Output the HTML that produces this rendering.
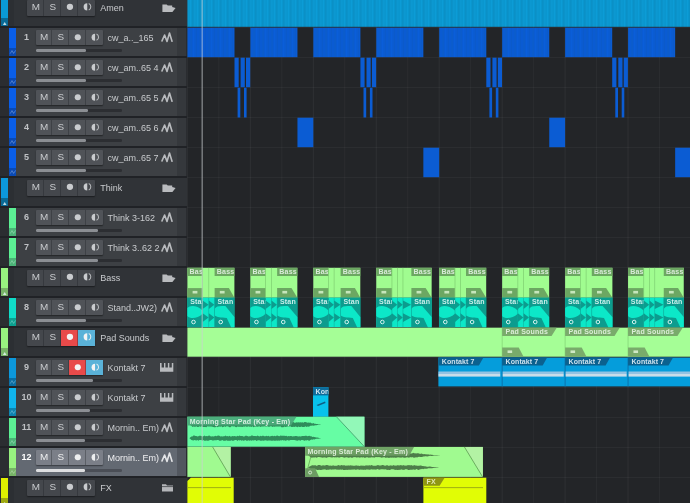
<!DOCTYPE html>
<html lang="en"><head><meta charset="utf-8"><title>Arrangement</title>
<style>
html,body{margin:0;padding:0;background:#232528;}
body{width:690px;height:503px;overflow:hidden;position:relative;font-family:"Liberation Sans",sans-serif;}
#root{position:absolute;left:0;top:0;width:690px;height:503px;overflow:hidden;background:#232528;filter:blur(0.42px);}
#tl{position:absolute;left:0;top:0;}
#panel{position:absolute;left:0;top:0;width:187.4px;height:503px;background:#2b2d31;overflow:hidden;}
.row{position:absolute;left:0;width:187.4px;height:30px;}
.sep{position:absolute;left:0;width:187.4px;height:1.4px;background:#202226;}
.fbg{position:absolute;left:8.3px;top:0;width:179.1px;height:30px;background:#303337;}
.fbg2{position:absolute;left:8.3px;top:0;width:5.7px;height:30px;background:#2c2f33;}
.tbg{position:absolute;left:16.4px;top:0;width:160.9px;height:30px;background:#3d4044;}
.tbg2{position:absolute;left:177.4px;top:0;width:8.6px;height:30px;background:#35383c;}
.tbg3{position:absolute;left:186px;top:0;width:1.4px;height:30px;background:#2a2c30;}
.sel .tbg{background:#636972;}
.sel .tbg2{background:#52575f;}
.strip{position:absolute;}
.btns{position:absolute;height:14.6px;width:68.2px;background:#505358;box-shadow:0 1px 1.5px rgba(0,0,0,.45);border-radius:1px;}
.row.f .btns{left:27.3px;top:2.3px;height:15.8px;background:#44474c;}
.row.f .b{line-height:13.6px;}
.row.f .b svg{top:-0.7px;}
.row.t .btns{left:35.6px;top:2.7px;width:67.2px;}
.sel .btns{background:#7b7f88;}
.b{position:absolute;top:0;height:100%;width:17.05px;text-align:center;color:#c9cbce;font-size:9.9px;line-height:15px;}
.row.t .b{width:16.8px;line-height:14.6px;}
.b+.b{box-shadow:-0.6px 0 0 rgba(30,32,35,.55);}
.b svg{position:absolute;left:0;top:0;width:100%;height:100%;}
.rec{background:#e84a4a;}
.mon{background:#5ab2d8;}
.num{position:absolute;left:16.9px;width:19px;text-align:center;top:4.5px;font-size:9px;line-height:11px;color:#bfc1c4;font-weight:bold;}
.sel .num{color:#fff;}
.name{position:absolute;font-size:9px;line-height:11px;color:#c9cbce;white-space:nowrap;}
.row.f .name{left:100.3px;top:5.5px;}
.row.t .name{left:107.6px;top:5.4px;}
.sel .name{color:#f0f0f2;}
.sl{position:absolute;left:35.6px;top:21.8px;height:2.6px;width:86px;background:#2c2e32;border-radius:1.3px;}
.sl i{position:absolute;left:0;top:0;height:100%;background:#8b8e93;border-radius:1.3px;display:block;}
.sel .sl{background:#4a4e56;}
.sel .sl i{background:#dedfe1;}
.ico{position:absolute;}
</style></head>
<body><div id="root">
<svg id="tl" width="690" height="503" viewBox="0 0 690 503" font-family="Liberation Sans, sans-serif">
<defs>
<pattern id="pa" width="7" height="8" patternUnits="userSpaceOnUse"><rect width="7" height="8" fill="#0a96ce"/><rect x="1" width="1" height="8" fill="#0c9cd6"/><rect x="3.2" width="1.2" height="8" fill="#0b8ec4"/><rect x="5.4" width="0.8" height="8" fill="#0c9ad4"/></pattern>
<pattern id="pb" width="9" height="8" patternUnits="userSpaceOnUse"><rect width="9" height="8" fill="#0a5bd2"/><rect x="1.5" width="1.2" height="8" fill="#0c5cc8"/><rect x="4.2" width="1" height="8" fill="#0a5edb"/><rect x="6.8" width="1" height="8" fill="#0b59c9"/></pattern>
</defs>
<rect x="187.4" y="0" width="502.6" height="503" fill="#232528"/>
<rect x="186.9" y="0" width="1" height="503" fill="#fff" opacity="0.055"/>
<rect x="218.38" y="0" width="1" height="503" fill="#fff" opacity="0.04"/>
<rect x="249.85" y="0" width="1" height="503" fill="#fff" opacity="0.055"/>
<rect x="281.33" y="0" width="1" height="503" fill="#fff" opacity="0.04"/>
<rect x="312.8" y="0" width="1" height="503" fill="#fff" opacity="0.055"/>
<rect x="344.27" y="0" width="1" height="503" fill="#fff" opacity="0.04"/>
<rect x="375.75" y="0" width="1" height="503" fill="#fff" opacity="0.055"/>
<rect x="407.23" y="0" width="1" height="503" fill="#fff" opacity="0.04"/>
<rect x="438.7" y="0" width="1" height="503" fill="#fff" opacity="0.055"/>
<rect x="470.18" y="0" width="1" height="503" fill="#fff" opacity="0.04"/>
<rect x="501.65" y="0" width="1" height="503" fill="#fff" opacity="0.055"/>
<rect x="533.12" y="0" width="1" height="503" fill="#fff" opacity="0.04"/>
<rect x="564.6" y="0" width="1" height="503" fill="#fff" opacity="0.055"/>
<rect x="596.08" y="0" width="1" height="503" fill="#fff" opacity="0.04"/>
<rect x="627.55" y="0" width="1" height="503" fill="#fff" opacity="0.055"/>
<rect x="659.02" y="0" width="1" height="503" fill="#fff" opacity="0.04"/>
<rect x="690.5" y="0" width="1" height="503" fill="#fff" opacity="0.055"/>
<rect x="187.4" y="27" width="502.6" height="1" fill="#fff" opacity="0.04"/>
<rect x="187.4" y="57" width="502.6" height="1" fill="#fff" opacity="0.04"/>
<rect x="187.4" y="87" width="502.6" height="1" fill="#fff" opacity="0.04"/>
<rect x="187.4" y="117" width="502.6" height="1" fill="#fff" opacity="0.04"/>
<rect x="187.4" y="147" width="502.6" height="1" fill="#fff" opacity="0.04"/>
<rect x="187.4" y="177" width="502.6" height="1" fill="#fff" opacity="0.04"/>
<rect x="187.4" y="207" width="502.6" height="1" fill="#fff" opacity="0.04"/>
<rect x="187.4" y="237" width="502.6" height="1" fill="#fff" opacity="0.04"/>
<rect x="187.4" y="267" width="502.6" height="1" fill="#fff" opacity="0.04"/>
<rect x="187.4" y="297" width="502.6" height="1" fill="#fff" opacity="0.04"/>
<rect x="187.4" y="327" width="502.6" height="1" fill="#fff" opacity="0.04"/>
<rect x="187.4" y="357" width="502.6" height="1" fill="#fff" opacity="0.04"/>
<rect x="187.4" y="387" width="502.6" height="1" fill="#fff" opacity="0.04"/>
<rect x="187.4" y="417" width="502.6" height="1" fill="#fff" opacity="0.04"/>
<rect x="187.4" y="447" width="502.6" height="1" fill="#fff" opacity="0.04"/>
<rect x="187.4" y="477" width="502.6" height="1" fill="#fff" opacity="0.04"/>
<rect x="187.4" y="0" width="502.6" height="26.8" fill="url(#pa)"/>
<rect x="187.4" y="27.7" width="47.1" height="29.5" fill="url(#pb)"/>
<rect x="250.35" y="27.7" width="47.1" height="29.5" fill="url(#pb)"/>
<rect x="313.3" y="27.7" width="47.1" height="29.5" fill="url(#pb)"/>
<rect x="376.25" y="27.7" width="47.1" height="29.5" fill="url(#pb)"/>
<rect x="439.2" y="27.7" width="47.1" height="29.5" fill="url(#pb)"/>
<rect x="502.15" y="27.7" width="47.1" height="29.5" fill="url(#pb)"/>
<rect x="565.1" y="27.7" width="47.1" height="29.5" fill="url(#pb)"/>
<rect x="628.05" y="27.7" width="47.1" height="29.5" fill="url(#pb)"/>
<rect x="234.5" y="57.7" width="4.2" height="29.5" fill="#0b5cd3"/>
<rect x="240.6" y="57.7" width="4.2" height="29.5" fill="#0b5cd3"/>
<rect x="246" y="57.7" width="4.2" height="29.5" fill="#0b5cd3"/>
<rect x="237.6" y="87.7" width="2.7" height="29.8" fill="#0b5cd3"/>
<rect x="244" y="87.7" width="2.6" height="29.8" fill="#0b5cd3"/>
<rect x="360.4" y="57.7" width="4.2" height="29.5" fill="#0b5cd3"/>
<rect x="366.5" y="57.7" width="4.2" height="29.5" fill="#0b5cd3"/>
<rect x="371.9" y="57.7" width="4.2" height="29.5" fill="#0b5cd3"/>
<rect x="363.5" y="87.7" width="2.7" height="29.8" fill="#0b5cd3"/>
<rect x="369.9" y="87.7" width="2.6" height="29.8" fill="#0b5cd3"/>
<rect x="486.3" y="57.7" width="4.2" height="29.5" fill="#0b5cd3"/>
<rect x="492.4" y="57.7" width="4.2" height="29.5" fill="#0b5cd3"/>
<rect x="497.8" y="57.7" width="4.2" height="29.5" fill="#0b5cd3"/>
<rect x="489.4" y="87.7" width="2.7" height="29.8" fill="#0b5cd3"/>
<rect x="495.8" y="87.7" width="2.6" height="29.8" fill="#0b5cd3"/>
<rect x="612.2" y="57.7" width="4.2" height="29.5" fill="#0b5cd3"/>
<rect x="618.3" y="57.7" width="4.2" height="29.5" fill="#0b5cd3"/>
<rect x="623.7" y="57.7" width="4.2" height="29.5" fill="#0b5cd3"/>
<rect x="615.3" y="87.7" width="2.7" height="29.8" fill="#0b5cd3"/>
<rect x="621.7" y="87.7" width="2.6" height="29.8" fill="#0b5cd3"/>
<rect x="297.45" y="117.7" width="15.85" height="29.5" fill="#0b5cd3"/>
<rect x="549.25" y="117.7" width="15.85" height="29.5" fill="#0b5cd3"/>
<rect x="423.35" y="147.7" width="15.85" height="29.5" fill="#0b5cd3"/>
<rect x="675.15" y="147.7" width="15.85" height="29.5" fill="#0b5cd3"/>
<rect x="187.4" y="267.8" width="47" height="29.9" fill="#a0fc90"/>
<rect x="187.4" y="297.6" width="47" height="29.6" fill="#0ce8c8"/>
<rect x="187.4" y="267.8" width="15.2" height="8.2" fill="#6ca762"/>
<rect x="187.4" y="288.1" width="15.2" height="9.6" fill="#6ca762"/>
<rect x="192.6" y="290.9" width="4.8" height="2.6" fill="#c6e6bc"/>
<clipPath id="c0_0"><rect x="187.4" y="267.8" width="15.2" height="30"/></clipPath>
<text x="189.6" y="274.4" font-size="7" font-weight="bold" fill-opacity="0.88" fill="#e8f4e8" letter-spacing="0.2" clip-path="url(#c0_0)">Bass</text>
<rect x="187.4" y="297.6" width="15.2" height="29.6" fill="#0c9c8e"/>
<path d="M187.4,308.1 C189.9,304.9 197.4,305.3 202.6,310.5 L202.6,313.7 C197.4,318.9 189.9,319.1 187.4,315.9 Z" fill="#0ce8c8"/>
<text x="190.2" y="274.4" font-size="7" font-weight="bold" fill-opacity="0.88" fill="#e4faf8" letter-spacing="0.2" clip-path="url(#c0_0)" transform="translate(0,29.8)">Stan</text>
<circle cx="193.5" cy="322" r="1.8" fill="none" stroke="#d6f4f0" stroke-width="1"/>
<rect x="202.25" y="267.8" width="0.7" height="29.9" fill="#7fcf72"/>
<path d="M202.6,300.5 L208.6,304.8 L202.6,309.1 Z" fill="#0c9c8e"/>
<path d="M202.6,313.3 L208.6,317.6 L202.6,321.9 Z" fill="#0c9c8e"/>
<rect x="208.45" y="267.8" width="0.7" height="29.9" fill="#7fcf72"/>
<path d="M208.8,300.5 L214.4,304.8 L208.8,309.1 Z" fill="#0c9c8e"/>
<path d="M208.8,313.3 L214.4,317.6 L208.8,321.9 Z" fill="#0c9c8e"/>
<rect x="214.6" y="267.8" width="19.8" height="8.2" fill="#6ca762"/>
<path d="M214.6,288.1 H228.9 L234.4,297.7 H214.6 Z" fill="#6ca762"/>
<rect x="219.8" y="290.9" width="4.8" height="2.6" fill="#c6e6bc"/>
<clipPath id="c0_3"><rect x="214.6" y="267.8" width="19.8" height="30"/></clipPath>
<text x="216.8" y="274.4" font-size="7" font-weight="bold" fill-opacity="0.88" fill="#e8f4e8" letter-spacing="0.2" clip-path="url(#c0_3)">Bass</text>
<rect x="214.6" y="297.6" width="19.8" height="29.6" fill="#0c9c8e"/>
<path d="M214.6,308.7 C216.6,306.1 219.1,305.7 225.4,306.1 L234.4,317.1 L234.4,327.2 L231.1,327.2 L226.8,317.9 C220.6,317.8 217.1,317.3 214.6,315.5 Z" fill="#0ce8c8"/>
<text x="217.4" y="274.4" font-size="7" font-weight="bold" fill-opacity="0.88" fill="#e4faf8" letter-spacing="0.2" clip-path="url(#c0_3)" transform="translate(0,29.8)">Stan</text>
<circle cx="220.7" cy="322" r="1.8" fill="none" stroke="#d6f4f0" stroke-width="1"/>
<rect x="202.3" y="297.6" width="0.6" height="29.6" fill="#0f9d90" opacity="0.7"/>
<rect x="208.5" y="297.6" width="0.6" height="29.6" fill="#0f9d90" opacity="0.7"/>
<rect x="214.3" y="297.6" width="0.6" height="29.6" fill="#0f9d90" opacity="0.7"/>
<rect x="250.35" y="267.8" width="47" height="29.9" fill="#a0fc90"/>
<rect x="250.35" y="297.6" width="47" height="29.6" fill="#0ce8c8"/>
<rect x="250.35" y="267.8" width="15.3" height="8.2" fill="#6ca762"/>
<rect x="250.35" y="288.1" width="15.3" height="9.6" fill="#6ca762"/>
<rect x="255.55" y="290.9" width="4.8" height="2.6" fill="#c6e6bc"/>
<clipPath id="c1_0"><rect x="250.35" y="267.8" width="15.3" height="30"/></clipPath>
<text x="252.55" y="274.4" font-size="7" font-weight="bold" fill-opacity="0.88" fill="#e8f4e8" letter-spacing="0.2" clip-path="url(#c1_0)">Bass</text>
<rect x="250.35" y="297.6" width="15.3" height="29.6" fill="#0c9c8e"/>
<path d="M250.35,308.1 C252.85,304.9 260.35,305.3 265.65,310.5 L265.65,313.7 C260.35,318.9 252.85,319.1 250.35,315.9 Z" fill="#0ce8c8"/>
<text x="253.15" y="274.4" font-size="7" font-weight="bold" fill-opacity="0.88" fill="#e4faf8" letter-spacing="0.2" clip-path="url(#c1_0)" transform="translate(0,29.8)">Stan</text>
<circle cx="256.45" cy="322" r="1.8" fill="none" stroke="#d6f4f0" stroke-width="1"/>
<rect x="265.3" y="267.8" width="0.7" height="29.9" fill="#7fcf72"/>
<path d="M265.65,300.5 L271.25,304.8 L265.65,309.1 Z" fill="#0c9c8e"/>
<path d="M265.65,313.3 L271.25,317.6 L265.65,321.9 Z" fill="#0c9c8e"/>
<rect x="271.1" y="267.8" width="0.7" height="29.9" fill="#7fcf72"/>
<path d="M271.45,300.5 L276.95,304.8 L271.45,309.1 Z" fill="#0c9c8e"/>
<path d="M271.45,313.3 L276.95,317.6 L271.45,321.9 Z" fill="#0c9c8e"/>
<rect x="277.15" y="267.8" width="20.2" height="8.2" fill="#6ca762"/>
<path d="M277.15,288.1 H291.45 L297.35,297.7 H277.15 Z" fill="#6ca762"/>
<rect x="282.35" y="290.9" width="4.8" height="2.6" fill="#c6e6bc"/>
<clipPath id="c1_3"><rect x="277.15" y="267.8" width="20.2" height="30"/></clipPath>
<text x="279.35" y="274.4" font-size="7" font-weight="bold" fill-opacity="0.88" fill="#e8f4e8" letter-spacing="0.2" clip-path="url(#c1_3)">Bass</text>
<rect x="277.15" y="297.6" width="20.2" height="29.6" fill="#0c9c8e"/>
<path d="M277.15,308.7 C279.15,306.1 281.65,305.7 287.95,306.1 L297.35,317.1 L297.35,327.2 L293.65,327.2 L289.35,317.9 C283.15,317.8 279.65,317.3 277.15,315.5 Z" fill="#0ce8c8"/>
<text x="279.95" y="274.4" font-size="7" font-weight="bold" fill-opacity="0.88" fill="#e4faf8" letter-spacing="0.2" clip-path="url(#c1_3)" transform="translate(0,29.8)">Stan</text>
<circle cx="283.25" cy="322" r="1.8" fill="none" stroke="#d6f4f0" stroke-width="1"/>
<rect x="265.35" y="297.6" width="0.6" height="29.6" fill="#0f9d90" opacity="0.7"/>
<rect x="271.15" y="297.6" width="0.6" height="29.6" fill="#0f9d90" opacity="0.7"/>
<rect x="276.85" y="297.6" width="0.6" height="29.6" fill="#0f9d90" opacity="0.7"/>
<rect x="313.3" y="267.8" width="47" height="29.9" fill="#a0fc90"/>
<rect x="313.3" y="297.6" width="47" height="29.6" fill="#0ce8c8"/>
<rect x="313.3" y="267.8" width="15.3" height="8.2" fill="#6ca762"/>
<rect x="313.3" y="288.1" width="15.3" height="9.6" fill="#6ca762"/>
<rect x="318.5" y="290.9" width="4.8" height="2.6" fill="#c6e6bc"/>
<clipPath id="c2_0"><rect x="313.3" y="267.8" width="15.3" height="30"/></clipPath>
<text x="315.5" y="274.4" font-size="7" font-weight="bold" fill-opacity="0.88" fill="#e8f4e8" letter-spacing="0.2" clip-path="url(#c2_0)">Bass</text>
<rect x="313.3" y="297.6" width="15.3" height="29.6" fill="#0c9c8e"/>
<path d="M313.3,308.1 C315.8,304.9 323.3,305.3 328.6,310.5 L328.6,313.7 C323.3,318.9 315.8,319.1 313.3,315.9 Z" fill="#0ce8c8"/>
<text x="316.1" y="274.4" font-size="7" font-weight="bold" fill-opacity="0.88" fill="#e4faf8" letter-spacing="0.2" clip-path="url(#c2_0)" transform="translate(0,29.8)">Stan</text>
<circle cx="319.4" cy="322" r="1.8" fill="none" stroke="#d6f4f0" stroke-width="1"/>
<rect x="328.25" y="267.8" width="0.7" height="29.9" fill="#7fcf72"/>
<path d="M328.6,300.5 L333.9,304.8 L328.6,309.1 Z" fill="#0c9c8e"/>
<path d="M328.6,313.3 L333.9,317.6 L328.6,321.9 Z" fill="#0c9c8e"/>
<rect x="333.75" y="267.8" width="0.7" height="29.9" fill="#7fcf72"/>
<path d="M334.1,300.5 L340.4,304.8 L334.1,309.1 Z" fill="#0c9c8e"/>
<path d="M334.1,313.3 L340.4,317.6 L334.1,321.9 Z" fill="#0c9c8e"/>
<rect x="340.6" y="267.8" width="19.7" height="8.2" fill="#6ca762"/>
<path d="M340.6,288.1 H354.9 L360.3,297.7 H340.6 Z" fill="#6ca762"/>
<rect x="345.8" y="290.9" width="4.8" height="2.6" fill="#c6e6bc"/>
<clipPath id="c2_3"><rect x="340.6" y="267.8" width="19.7" height="30"/></clipPath>
<text x="342.8" y="274.4" font-size="7" font-weight="bold" fill-opacity="0.88" fill="#e8f4e8" letter-spacing="0.2" clip-path="url(#c2_3)">Bass</text>
<rect x="340.6" y="297.6" width="19.7" height="29.6" fill="#0c9c8e"/>
<path d="M340.6,308.7 C342.6,306.1 345.1,305.7 351.4,306.1 L360.3,317.1 L360.3,327.2 L357.1,327.2 L352.8,317.9 C346.6,317.8 343.1,317.3 340.6,315.5 Z" fill="#0ce8c8"/>
<text x="343.4" y="274.4" font-size="7" font-weight="bold" fill-opacity="0.88" fill="#e4faf8" letter-spacing="0.2" clip-path="url(#c2_3)" transform="translate(0,29.8)">Stan</text>
<circle cx="346.7" cy="322" r="1.8" fill="none" stroke="#d6f4f0" stroke-width="1"/>
<rect x="328.3" y="297.6" width="0.6" height="29.6" fill="#0f9d90" opacity="0.7"/>
<rect x="333.8" y="297.6" width="0.6" height="29.6" fill="#0f9d90" opacity="0.7"/>
<rect x="340.3" y="297.6" width="0.6" height="29.6" fill="#0f9d90" opacity="0.7"/>
<rect x="376.25" y="267.8" width="55.4" height="29.9" fill="#a0fc90"/>
<rect x="376.25" y="297.6" width="55.4" height="29.6" fill="#0ce8c8"/>
<rect x="376.25" y="267.8" width="15.7" height="8.2" fill="#6ca762"/>
<rect x="376.25" y="288.1" width="15.7" height="9.6" fill="#6ca762"/>
<rect x="381.45" y="290.9" width="4.8" height="2.6" fill="#c6e6bc"/>
<clipPath id="c3_0"><rect x="376.25" y="267.8" width="15.7" height="30"/></clipPath>
<text x="378.45" y="274.4" font-size="7" font-weight="bold" fill-opacity="0.88" fill="#e8f4e8" letter-spacing="0.2" clip-path="url(#c3_0)">Bass</text>
<rect x="376.25" y="297.6" width="15.7" height="29.6" fill="#0c9c8e"/>
<path d="M376.25,308.1 C378.75,304.9 386.25,305.3 391.95,310.5 L391.95,313.7 C386.25,318.9 378.75,319.1 376.25,315.9 Z" fill="#0ce8c8"/>
<text x="379.05" y="274.4" font-size="7" font-weight="bold" fill-opacity="0.88" fill="#e4faf8" letter-spacing="0.2" clip-path="url(#c3_0)" transform="translate(0,29.8)">Stan</text>
<circle cx="382.35" cy="322" r="1.8" fill="none" stroke="#d6f4f0" stroke-width="1"/>
<rect x="391.6" y="267.8" width="0.7" height="29.9" fill="#7fcf72"/>
<path d="M391.95,300.5 L397.25,304.8 L391.95,309.1 Z" fill="#0c9c8e"/>
<path d="M391.95,313.3 L397.25,317.6 L391.95,321.9 Z" fill="#0c9c8e"/>
<rect x="397.1" y="267.8" width="0.7" height="29.9" fill="#7fcf72"/>
<path d="M397.45,300.5 L402.75,304.8 L397.45,309.1 Z" fill="#0c9c8e"/>
<path d="M397.45,313.3 L402.75,317.6 L397.45,321.9 Z" fill="#0c9c8e"/>
<rect x="402.6" y="267.8" width="0.7" height="29.9" fill="#7fcf72"/>
<path d="M402.95,300.5 L411.15,304.8 L402.95,309.1 Z" fill="#0c9c8e"/>
<path d="M402.95,313.3 L411.15,317.6 L402.95,321.9 Z" fill="#0c9c8e"/>
<rect x="411.35" y="267.8" width="20.3" height="8.2" fill="#6ca762"/>
<path d="M411.35,288.1 H425.65 L431.65,297.7 H411.35 Z" fill="#6ca762"/>
<rect x="416.55" y="290.9" width="4.8" height="2.6" fill="#c6e6bc"/>
<clipPath id="c3_4"><rect x="411.35" y="267.8" width="20.3" height="30"/></clipPath>
<text x="413.55" y="274.4" font-size="7" font-weight="bold" fill-opacity="0.88" fill="#e8f4e8" letter-spacing="0.2" clip-path="url(#c3_4)">Bass</text>
<rect x="411.35" y="297.6" width="20.3" height="29.6" fill="#0c9c8e"/>
<path d="M411.35,308.7 C413.35,306.1 415.85,305.7 422.15,306.1 L431.65,317.1 L431.65,327.2 L427.85,327.2 L423.55,317.9 C417.35,317.8 413.85,317.3 411.35,315.5 Z" fill="#0ce8c8"/>
<text x="414.15" y="274.4" font-size="7" font-weight="bold" fill-opacity="0.88" fill="#e4faf8" letter-spacing="0.2" clip-path="url(#c3_4)" transform="translate(0,29.8)">Stan</text>
<circle cx="417.45" cy="322" r="1.8" fill="none" stroke="#d6f4f0" stroke-width="1"/>
<rect x="391.65" y="297.6" width="0.6" height="29.6" fill="#0f9d90" opacity="0.7"/>
<rect x="397.15" y="297.6" width="0.6" height="29.6" fill="#0f9d90" opacity="0.7"/>
<rect x="402.65" y="297.6" width="0.6" height="29.6" fill="#0f9d90" opacity="0.7"/>
<rect x="411.05" y="297.6" width="0.6" height="29.6" fill="#0f9d90" opacity="0.7"/>
<rect x="439.2" y="267.8" width="47" height="29.9" fill="#a0fc90"/>
<rect x="439.2" y="297.6" width="47" height="29.6" fill="#0ce8c8"/>
<rect x="439.2" y="267.8" width="15.8" height="8.2" fill="#6ca762"/>
<rect x="439.2" y="288.1" width="15.8" height="9.6" fill="#6ca762"/>
<rect x="444.4" y="290.9" width="4.8" height="2.6" fill="#c6e6bc"/>
<clipPath id="c4_0"><rect x="439.2" y="267.8" width="15.8" height="30"/></clipPath>
<text x="441.4" y="274.4" font-size="7" font-weight="bold" fill-opacity="0.88" fill="#e8f4e8" letter-spacing="0.2" clip-path="url(#c4_0)">Bass</text>
<rect x="439.2" y="297.6" width="15.8" height="29.6" fill="#0c9c8e"/>
<path d="M439.2,308.1 C441.7,304.9 449.2,305.3 455,310.5 L455,313.7 C449.2,318.9 441.7,319.1 439.2,315.9 Z" fill="#0ce8c8"/>
<text x="442" y="274.4" font-size="7" font-weight="bold" fill-opacity="0.88" fill="#e4faf8" letter-spacing="0.2" clip-path="url(#c4_0)" transform="translate(0,29.8)">Stan</text>
<circle cx="445.3" cy="322" r="1.8" fill="none" stroke="#d6f4f0" stroke-width="1"/>
<rect x="454.65" y="267.8" width="0.7" height="29.9" fill="#7fcf72"/>
<path d="M455,300.5 L460.2,304.8 L455,309.1 Z" fill="#0c9c8e"/>
<path d="M455,313.3 L460.2,317.6 L455,321.9 Z" fill="#0c9c8e"/>
<rect x="460.05" y="267.8" width="0.7" height="29.9" fill="#7fcf72"/>
<path d="M460.4,300.5 L465.8,304.8 L460.4,309.1 Z" fill="#0c9c8e"/>
<path d="M460.4,313.3 L465.8,317.6 L460.4,321.9 Z" fill="#0c9c8e"/>
<rect x="466" y="267.8" width="20.2" height="8.2" fill="#6ca762"/>
<path d="M466,288.1 H480.3 L486.2,297.7 H466 Z" fill="#6ca762"/>
<rect x="471.2" y="290.9" width="4.8" height="2.6" fill="#c6e6bc"/>
<clipPath id="c4_3"><rect x="466" y="267.8" width="20.2" height="30"/></clipPath>
<text x="468.2" y="274.4" font-size="7" font-weight="bold" fill-opacity="0.88" fill="#e8f4e8" letter-spacing="0.2" clip-path="url(#c4_3)">Bass</text>
<rect x="466" y="297.6" width="20.2" height="29.6" fill="#0c9c8e"/>
<path d="M466,308.7 C468,306.1 470.5,305.7 476.8,306.1 L486.2,317.1 L486.2,327.2 L482.5,327.2 L478.2,317.9 C472,317.8 468.5,317.3 466,315.5 Z" fill="#0ce8c8"/>
<text x="468.8" y="274.4" font-size="7" font-weight="bold" fill-opacity="0.88" fill="#e4faf8" letter-spacing="0.2" clip-path="url(#c4_3)" transform="translate(0,29.8)">Stan</text>
<circle cx="472.1" cy="322" r="1.8" fill="none" stroke="#d6f4f0" stroke-width="1"/>
<rect x="454.7" y="297.6" width="0.6" height="29.6" fill="#0f9d90" opacity="0.7"/>
<rect x="460.1" y="297.6" width="0.6" height="29.6" fill="#0f9d90" opacity="0.7"/>
<rect x="465.7" y="297.6" width="0.6" height="29.6" fill="#0f9d90" opacity="0.7"/>
<rect x="502.15" y="267.8" width="47" height="29.9" fill="#a0fc90"/>
<rect x="502.15" y="297.6" width="47" height="29.6" fill="#0ce8c8"/>
<rect x="502.15" y="267.8" width="15.7" height="8.2" fill="#6ca762"/>
<rect x="502.15" y="288.1" width="15.7" height="9.6" fill="#6ca762"/>
<rect x="507.35" y="290.9" width="4.8" height="2.6" fill="#c6e6bc"/>
<clipPath id="c5_0"><rect x="502.15" y="267.8" width="15.7" height="30"/></clipPath>
<text x="504.35" y="274.4" font-size="7" font-weight="bold" fill-opacity="0.88" fill="#e8f4e8" letter-spacing="0.2" clip-path="url(#c5_0)">Bass</text>
<rect x="502.15" y="297.6" width="15.7" height="29.6" fill="#0c9c8e"/>
<path d="M502.15,308.1 C504.65,304.9 512.15,305.3 517.85,310.5 L517.85,313.7 C512.15,318.9 504.65,319.1 502.15,315.9 Z" fill="#0ce8c8"/>
<text x="504.95" y="274.4" font-size="7" font-weight="bold" fill-opacity="0.88" fill="#e4faf8" letter-spacing="0.2" clip-path="url(#c5_0)" transform="translate(0,29.8)">Stan</text>
<circle cx="508.25" cy="322" r="1.8" fill="none" stroke="#d6f4f0" stroke-width="1"/>
<rect x="517.5" y="267.8" width="0.7" height="29.9" fill="#7fcf72"/>
<path d="M517.85,300.5 L523.35,304.8 L517.85,309.1 Z" fill="#0c9c8e"/>
<path d="M517.85,313.3 L523.35,317.6 L517.85,321.9 Z" fill="#0c9c8e"/>
<rect x="523.2" y="267.8" width="0.7" height="29.9" fill="#7fcf72"/>
<path d="M523.55,300.5 L528.95,304.8 L523.55,309.1 Z" fill="#0c9c8e"/>
<path d="M523.55,313.3 L528.95,317.6 L523.55,321.9 Z" fill="#0c9c8e"/>
<rect x="529.15" y="267.8" width="20" height="8.2" fill="#6ca762"/>
<path d="M529.15,288.1 H543.45 L549.15,297.7 H529.15 Z" fill="#6ca762"/>
<rect x="534.35" y="290.9" width="4.8" height="2.6" fill="#c6e6bc"/>
<clipPath id="c5_3"><rect x="529.15" y="267.8" width="20" height="30"/></clipPath>
<text x="531.35" y="274.4" font-size="7" font-weight="bold" fill-opacity="0.88" fill="#e8f4e8" letter-spacing="0.2" clip-path="url(#c5_3)">Bass</text>
<rect x="529.15" y="297.6" width="20" height="29.6" fill="#0c9c8e"/>
<path d="M529.15,308.7 C531.15,306.1 533.65,305.7 539.95,306.1 L549.15,317.1 L549.15,327.2 L545.65,327.2 L541.35,317.9 C535.15,317.8 531.65,317.3 529.15,315.5 Z" fill="#0ce8c8"/>
<text x="531.95" y="274.4" font-size="7" font-weight="bold" fill-opacity="0.88" fill="#e4faf8" letter-spacing="0.2" clip-path="url(#c5_3)" transform="translate(0,29.8)">Stan</text>
<circle cx="535.25" cy="322" r="1.8" fill="none" stroke="#d6f4f0" stroke-width="1"/>
<rect x="517.55" y="297.6" width="0.6" height="29.6" fill="#0f9d90" opacity="0.7"/>
<rect x="523.25" y="297.6" width="0.6" height="29.6" fill="#0f9d90" opacity="0.7"/>
<rect x="528.85" y="297.6" width="0.6" height="29.6" fill="#0f9d90" opacity="0.7"/>
<rect x="565.1" y="267.8" width="47.3" height="29.9" fill="#a0fc90"/>
<rect x="565.1" y="297.6" width="47.3" height="29.6" fill="#0ce8c8"/>
<rect x="565.1" y="267.8" width="15.4" height="8.2" fill="#6ca762"/>
<rect x="565.1" y="288.1" width="15.4" height="9.6" fill="#6ca762"/>
<rect x="570.3" y="290.9" width="4.8" height="2.6" fill="#c6e6bc"/>
<clipPath id="c6_0"><rect x="565.1" y="267.8" width="15.4" height="30"/></clipPath>
<text x="567.3" y="274.4" font-size="7" font-weight="bold" fill-opacity="0.88" fill="#e8f4e8" letter-spacing="0.2" clip-path="url(#c6_0)">Bass</text>
<rect x="565.1" y="297.6" width="15.4" height="29.6" fill="#0c9c8e"/>
<path d="M565.1,308.1 C567.6,304.9 575.1,305.3 580.5,310.5 L580.5,313.7 C575.1,318.9 567.6,319.1 565.1,315.9 Z" fill="#0ce8c8"/>
<text x="567.9" y="274.4" font-size="7" font-weight="bold" fill-opacity="0.88" fill="#e4faf8" letter-spacing="0.2" clip-path="url(#c6_0)" transform="translate(0,29.8)">Stan</text>
<circle cx="571.2" cy="322" r="1.8" fill="none" stroke="#d6f4f0" stroke-width="1"/>
<rect x="580.15" y="267.8" width="0.7" height="29.9" fill="#7fcf72"/>
<path d="M580.5,300.5 L585.9,304.8 L580.5,309.1 Z" fill="#0c9c8e"/>
<path d="M580.5,313.3 L585.9,317.6 L580.5,321.9 Z" fill="#0c9c8e"/>
<rect x="585.75" y="267.8" width="0.7" height="29.9" fill="#7fcf72"/>
<path d="M586.1,300.5 L591.6,304.8 L586.1,309.1 Z" fill="#0c9c8e"/>
<path d="M586.1,313.3 L591.6,317.6 L586.1,321.9 Z" fill="#0c9c8e"/>
<rect x="591.8" y="267.8" width="20.6" height="8.2" fill="#6ca762"/>
<path d="M591.8,288.1 H606.1 L612.4,297.7 H591.8 Z" fill="#6ca762"/>
<rect x="597" y="290.9" width="4.8" height="2.6" fill="#c6e6bc"/>
<clipPath id="c6_3"><rect x="591.8" y="267.8" width="20.6" height="30"/></clipPath>
<text x="594" y="274.4" font-size="7" font-weight="bold" fill-opacity="0.88" fill="#e8f4e8" letter-spacing="0.2" clip-path="url(#c6_3)">Bass</text>
<rect x="591.8" y="297.6" width="20.6" height="29.6" fill="#0c9c8e"/>
<path d="M591.8,308.7 C593.8,306.1 596.3,305.7 602.6,306.1 L612.4,317.1 L612.4,327.2 L608.3,327.2 L604,317.9 C597.8,317.8 594.3,317.3 591.8,315.5 Z" fill="#0ce8c8"/>
<text x="594.6" y="274.4" font-size="7" font-weight="bold" fill-opacity="0.88" fill="#e4faf8" letter-spacing="0.2" clip-path="url(#c6_3)" transform="translate(0,29.8)">Stan</text>
<circle cx="597.9" cy="322" r="1.8" fill="none" stroke="#d6f4f0" stroke-width="1"/>
<rect x="580.2" y="297.6" width="0.6" height="29.6" fill="#0f9d90" opacity="0.7"/>
<rect x="585.8" y="297.6" width="0.6" height="29.6" fill="#0f9d90" opacity="0.7"/>
<rect x="591.5" y="297.6" width="0.6" height="29.6" fill="#0f9d90" opacity="0.7"/>
<rect x="628.05" y="267.8" width="55.7" height="29.9" fill="#a0fc90"/>
<rect x="628.05" y="297.6" width="55.7" height="29.6" fill="#0ce8c8"/>
<rect x="628.05" y="267.8" width="15.7" height="8.2" fill="#6ca762"/>
<rect x="628.05" y="288.1" width="15.7" height="9.6" fill="#6ca762"/>
<rect x="633.25" y="290.9" width="4.8" height="2.6" fill="#c6e6bc"/>
<clipPath id="c7_0"><rect x="628.05" y="267.8" width="15.7" height="30"/></clipPath>
<text x="630.25" y="274.4" font-size="7" font-weight="bold" fill-opacity="0.88" fill="#e8f4e8" letter-spacing="0.2" clip-path="url(#c7_0)">Bass</text>
<rect x="628.05" y="297.6" width="15.7" height="29.6" fill="#0c9c8e"/>
<path d="M628.05,308.1 C630.55,304.9 638.05,305.3 643.75,310.5 L643.75,313.7 C638.05,318.9 630.55,319.1 628.05,315.9 Z" fill="#0ce8c8"/>
<text x="630.85" y="274.4" font-size="7" font-weight="bold" fill-opacity="0.88" fill="#e4faf8" letter-spacing="0.2" clip-path="url(#c7_0)" transform="translate(0,29.8)">Stan</text>
<circle cx="634.15" cy="322" r="1.8" fill="none" stroke="#d6f4f0" stroke-width="1"/>
<rect x="643.4" y="267.8" width="0.7" height="29.9" fill="#7fcf72"/>
<path d="M643.75,300.5 L649.25,304.8 L643.75,309.1 Z" fill="#0c9c8e"/>
<path d="M643.75,313.3 L649.25,317.6 L643.75,321.9 Z" fill="#0c9c8e"/>
<rect x="649.1" y="267.8" width="0.7" height="29.9" fill="#7fcf72"/>
<path d="M649.45,300.5 L654.55,304.8 L649.45,309.1 Z" fill="#0c9c8e"/>
<path d="M649.45,313.3 L654.55,317.6 L649.45,321.9 Z" fill="#0c9c8e"/>
<rect x="654.4" y="267.8" width="0.7" height="29.9" fill="#7fcf72"/>
<path d="M654.75,300.5 L663.55,304.8 L654.75,309.1 Z" fill="#0c9c8e"/>
<path d="M654.75,313.3 L663.55,317.6 L654.75,321.9 Z" fill="#0c9c8e"/>
<rect x="663.75" y="267.8" width="20" height="8.2" fill="#6ca762"/>
<path d="M663.75,288.1 H678.05 L683.75,297.7 H663.75 Z" fill="#6ca762"/>
<rect x="668.95" y="290.9" width="4.8" height="2.6" fill="#c6e6bc"/>
<clipPath id="c7_4"><rect x="663.75" y="267.8" width="20" height="30"/></clipPath>
<text x="665.95" y="274.4" font-size="7" font-weight="bold" fill-opacity="0.88" fill="#e8f4e8" letter-spacing="0.2" clip-path="url(#c7_4)">Bass</text>
<rect x="663.75" y="297.6" width="20" height="29.6" fill="#0c9c8e"/>
<path d="M663.75,308.7 C665.75,306.1 668.25,305.7 674.55,306.1 L683.75,317.1 L683.75,327.2 L680.25,327.2 L675.95,317.9 C669.75,317.8 666.25,317.3 663.75,315.5 Z" fill="#0ce8c8"/>
<text x="666.55" y="274.4" font-size="7" font-weight="bold" fill-opacity="0.88" fill="#e4faf8" letter-spacing="0.2" clip-path="url(#c7_4)" transform="translate(0,29.8)">Stan</text>
<circle cx="669.85" cy="322" r="1.8" fill="none" stroke="#d6f4f0" stroke-width="1"/>
<rect x="643.45" y="297.6" width="0.6" height="29.6" fill="#0f9d90" opacity="0.7"/>
<rect x="649.15" y="297.6" width="0.6" height="29.6" fill="#0f9d90" opacity="0.7"/>
<rect x="654.45" y="297.6" width="0.6" height="29.6" fill="#0f9d90" opacity="0.7"/>
<rect x="663.45" y="297.6" width="0.6" height="29.6" fill="#0f9d90" opacity="0.7"/>
<rect x="187.4" y="327.7" width="502.6" height="29" fill="#a5fe96"/>
<rect x="501.75" y="327.7" width="0.8" height="29" fill="#86d878"/>
<path d="M502.15,327.7 H556.75 L551.55,336 H502.15 Z" fill="#79ab6b"/>
<path d="M502.15,347.4 H518.75 L523.55,356.7 H502.15 Z" fill="#79ab6b"/>
<rect x="507.55" y="350.4" width="4.6" height="2.6" fill="#cfe8c6"/>
<text x="505.55" y="334.4" font-size="7" font-weight="bold" fill-opacity="0.88" fill="#e9f6e6" letter-spacing="0.22">Pad Sounds</text>
<rect x="564.7" y="327.7" width="0.8" height="29" fill="#86d878"/>
<path d="M565.1,327.7 H619.7 L614.5,336 H565.1 Z" fill="#79ab6b"/>
<path d="M565.1,347.4 H581.7 L586.5,356.7 H565.1 Z" fill="#79ab6b"/>
<rect x="570.5" y="350.4" width="4.6" height="2.6" fill="#cfe8c6"/>
<text x="568.5" y="334.4" font-size="7" font-weight="bold" fill-opacity="0.88" fill="#e9f6e6" letter-spacing="0.22">Pad Sounds</text>
<rect x="627.65" y="327.7" width="0.8" height="29" fill="#86d878"/>
<path d="M628.05,327.7 H682.65 L677.45,336 H628.05 Z" fill="#79ab6b"/>
<path d="M628.05,347.4 H644.65 L649.45,356.7 H628.05 Z" fill="#79ab6b"/>
<rect x="633.45" y="350.4" width="4.6" height="2.6" fill="#cfe8c6"/>
<text x="631.45" y="334.4" font-size="7" font-weight="bold" fill-opacity="0.88" fill="#e9f6e6" letter-spacing="0.22">Pad Sounds</text>
<rect x="438.4" y="357.6" width="251.6" height="28.8" fill="#059ddb"/>
<path d="M438.4,357.6 H483.4 L478.9,365.6 H438.4 Z" fill="#0b618f"/>
<text x="441.8" y="363.9" font-size="7" font-weight="bold" fill-opacity="0.88" fill="#e6f2fa" letter-spacing="0.08">Kontakt 7</text>
<rect x="438.4" y="371.5" width="61.85" height="2.6" fill="#93c3e3"/>
<rect x="438.4" y="374" width="61.85" height="2.6" fill="#c9dde9"/>
<rect x="501.7" y="357.6" width="0.9" height="28.8" fill="#0c6fa8"/>
<path d="M502.15,357.6 H547.15 L542.65,365.6 H502.15 Z" fill="#0b618f"/>
<text x="505.55" y="363.9" font-size="7" font-weight="bold" fill-opacity="0.88" fill="#e6f2fa" letter-spacing="0.08">Kontakt 7</text>
<rect x="502.65" y="371.5" width="61.05" height="2.6" fill="#93c3e3"/>
<rect x="502.65" y="374" width="61.05" height="2.6" fill="#c9dde9"/>
<rect x="564.65" y="357.6" width="0.9" height="28.8" fill="#0c6fa8"/>
<path d="M565.1,357.6 H610.1 L605.6,365.6 H565.1 Z" fill="#0b618f"/>
<text x="568.5" y="363.9" font-size="7" font-weight="bold" fill-opacity="0.88" fill="#e6f2fa" letter-spacing="0.08">Kontakt 7</text>
<rect x="565.6" y="371.5" width="61.05" height="2.6" fill="#93c3e3"/>
<rect x="565.6" y="374" width="61.05" height="2.6" fill="#c9dde9"/>
<rect x="627.6" y="357.6" width="0.9" height="28.8" fill="#0c6fa8"/>
<path d="M628.05,357.6 H673.05 L668.55,365.6 H628.05 Z" fill="#0b618f"/>
<text x="631.45" y="363.9" font-size="7" font-weight="bold" fill-opacity="0.88" fill="#e6f2fa" letter-spacing="0.08">Kontakt 7</text>
<rect x="628.55" y="371.5" width="70.05" height="2.6" fill="#93c3e3"/>
<rect x="628.55" y="374" width="70.05" height="2.6" fill="#c9dde9"/>
<rect x="313" y="387.2" width="15.4" height="29.6" fill="#08c2ec"/>
<rect x="313" y="387.2" width="15.4" height="8.2" fill="#0e6c9b"/>
<clipPath id="ckon"><rect x="313" y="387.2" width="15.4" height="12"/></clipPath>
<text x="315.4" y="393.8" font-size="7" font-weight="bold" fill-opacity="0.88" fill="#e6f2fa" letter-spacing="0.2" clip-path="url(#ckon)">Kontakt 7</text>
<path d="M316.6,405 L325,401.4 L325.6,403 L318,406.1 Z" fill="#0f5f86"/>
<rect x="187.4" y="416.7" width="177" height="30" fill="#66fda4"/>
<path d="M336.4,416.7 H364.4 V446.7 Z" fill="#92f8b8"/>
<path d="M336.4,416.7 L364.4,446.7" stroke="#3f9a68" stroke-width="0.8"/>
<path d="M189.4,424.5 L190.4,423.82 L191.4,422.96 L192.4,422.81 L193.4,422.56 L194.4,421.8 L195.4,421.97 L196.4,422.17 L197.4,422.17 L198.4,422.29 L199.4,422.14 L200.4,422.05 L201.4,422.52 L202.4,421.94 L203.4,422.09 L204.4,422.09 L205.4,422.42 L206.4,422.37 L207.4,421.92 L208.4,422.69 L209.4,421.84 L210.4,422.18 L211.4,422.31 L212.4,422.47 L213.4,422.23 L214.4,422.13 L215.4,421.95 L216.4,422.14 L217.4,421.94 L218.4,421.9 L219.4,422.09 L220.4,421.97 L221.4,422.53 L222.4,421.95 L223.4,422.74 L224.4,422.4 L225.4,422.52 L226.4,421.93 L227.4,422.2 L228.4,422.09 L229.4,421.92 L230.4,422.31 L231.4,422.51 L232.4,422.21 L233.4,422.62 L234.4,422.2 L235.4,422.78 L236.4,422.5 L237.4,421.91 L238.4,422.35 L239.4,422.17 L240.4,422.25 L241.4,421.86 L242.4,422.38 L243.4,422.58 L244.4,421.82 L245.4,422.26 L246.4,422.4 L247.4,422.81 L248.4,422.18 L249.4,422.18 L250.4,422.13 L251.4,422.1 L252.4,422.8 L253.4,422.13 L254.4,422.57 L255.4,422.22 L256.4,422.45 L257.4,422.45 L258.4,422.52 L259.4,422.03 L260.4,422.24 L261.4,422.51 L262.4,422 L263.4,422.63 L264.4,422.11 L265.4,422.5 L266.4,421.97 L267.4,421.95 L268.4,422.48 L269.4,421.92 L270.4,422.6 L271.4,422.28 L272.4,422 L273.4,422.64 L274.4,422 L275.4,422 L276.4,422.69 L277.4,422.01 L278.4,422.47 L279.4,422.4 L280.4,421.88 L281.4,422.82 L282.4,421.92 L283.4,422.38 L284.4,421.87 L285.4,422.06 L286.4,422.15 L287.4,422.53 L288.4,422.59 L289.4,422.22 L290.4,421.99 L291.4,421.9 L292.4,421.88 L293.4,421.9 L294.4,422.81 L295.4,422.65 L296.4,422.15 L297.4,422.4 L298.4,422.2 L299.4,422.57 L300.4,422.34 L301.4,422.47 L302.4,422.28 L303.4,422.65 L304.4,421.88 L305.4,421.98 L306.4,422.18 L307.4,422.77 L308.4,422.62 L309.4,422.66 L310.4,422.57 L311.4,423.29 L312.4,423.4 L313.4,423.08 L314.4,423.7 L315.4,423.75 L316.4,423.88 L317.4,423.96 L318.4,424.18 L319.4,424.3 L320.4,424.36 L321.4,424.47 L321.4,424.53 L320.4,424.62 L319.4,424.75 L318.4,424.84 L317.4,424.98 L316.4,425.21 L315.4,425.25 L314.4,425.49 L313.4,425.85 L312.4,425.57 L311.4,425.76 L310.4,425.81 L309.4,426.38 L308.4,426.63 L307.4,426.45 L306.4,427.06 L305.4,426.18 L304.4,427 L303.4,426.99 L302.4,427.01 L301.4,426.38 L300.4,426.98 L299.4,427.06 L298.4,426.52 L297.4,427.14 L296.4,426.71 L295.4,426.48 L294.4,426.94 L293.4,426.77 L292.4,427.09 L291.4,426.89 L290.4,426.22 L289.4,426.47 L288.4,426.24 L287.4,426.52 L286.4,426.71 L285.4,427.03 L284.4,426.4 L283.4,427.15 L282.4,427.19 L281.4,427.14 L280.4,426.33 L279.4,426.59 L278.4,426.6 L277.4,426.45 L276.4,426.47 L275.4,426.53 L274.4,426.83 L273.4,426.46 L272.4,427.03 L271.4,426.37 L270.4,426.3 L269.4,426.64 L268.4,426.84 L267.4,426.35 L266.4,426.62 L265.4,426.52 L264.4,426.28 L263.4,426.62 L262.4,426.42 L261.4,426.4 L260.4,426.93 L259.4,426.2 L258.4,426.56 L257.4,426.79 L256.4,426.49 L255.4,426.5 L254.4,426.64 L253.4,427.16 L252.4,426.24 L251.4,426.93 L250.4,426.54 L249.4,426.65 L248.4,426.24 L247.4,426.81 L246.4,426.77 L245.4,426.19 L244.4,426.71 L243.4,426.48 L242.4,426.91 L241.4,426.69 L240.4,426.81 L239.4,426.79 L238.4,426.71 L237.4,426.56 L236.4,427.16 L235.4,427.06 L234.4,426.33 L233.4,426.59 L232.4,426.21 L231.4,426.25 L230.4,427.2 L229.4,427.18 L228.4,426.51 L227.4,426.22 L226.4,426.22 L225.4,426.96 L224.4,426.33 L223.4,427 L222.4,427.19 L221.4,426.24 L220.4,426.76 L219.4,426.39 L218.4,426.76 L217.4,427.16 L216.4,426.34 L215.4,427.19 L214.4,427.13 L213.4,427.1 L212.4,426.77 L211.4,426.57 L210.4,426.48 L209.4,426.62 L208.4,426.4 L207.4,426.27 L206.4,427.13 L205.4,427 L204.4,427.12 L203.4,427.08 L202.4,426.66 L201.4,426.21 L200.4,426.78 L199.4,426.24 L198.4,426.93 L197.4,427.06 L196.4,426.33 L195.4,426.66 L194.4,426.66 L193.4,426.41 L192.4,427.03 L191.4,425.66 L190.4,425.26 L189.4,424.5 Z" fill="#2f8c5b"/>
<path d="M189.4,438.2 L190.4,437.37 L191.4,436.58 L192.4,436.5 L193.4,435.56 L194.4,435.6 L195.4,436.04 L196.4,435.97 L197.4,436.51 L198.4,436.24 L199.4,435.74 L200.4,435.71 L201.4,435.89 L202.4,436.52 L203.4,436.31 L204.4,435.52 L205.4,436.23 L206.4,435.97 L207.4,436.32 L208.4,435.82 L209.4,435.61 L210.4,436.16 L211.4,436.38 L212.4,436.22 L213.4,436.52 L214.4,436.18 L215.4,435.69 L216.4,436.2 L217.4,435.8 L218.4,435.53 L219.4,435.76 L220.4,436.51 L221.4,436.15 L222.4,436.52 L223.4,436.34 L224.4,436.32 L225.4,435.57 L226.4,436.17 L227.4,435.99 L228.4,436.42 L229.4,435.71 L230.4,436.49 L231.4,436.43 L232.4,435.9 L233.4,436.18 L234.4,435.97 L235.4,436.2 L236.4,436.45 L237.4,435.82 L238.4,436.36 L239.4,435.51 L240.4,436.11 L241.4,435.92 L242.4,436.06 L243.4,436.47 L244.4,436.49 L245.4,435.67 L246.4,435.78 L247.4,435.88 L248.4,436.42 L249.4,436.37 L250.4,436.22 L251.4,435.5 L252.4,435.52 L253.4,436.03 L254.4,436.03 L255.4,436.11 L256.4,436.14 L257.4,435.54 L258.4,436.01 L259.4,436.43 L260.4,435.72 L261.4,436.16 L262.4,435.73 L263.4,435.84 L264.4,436.15 L265.4,436.24 L266.4,435.74 L267.4,436.22 L268.4,435.86 L269.4,436.51 L270.4,436.27 L271.4,436.05 L272.4,435.86 L273.4,436.17 L274.4,435.77 L275.4,436.17 L276.4,435.63 L277.4,435.52 L278.4,435.99 L279.4,436.36 L280.4,435.56 L281.4,435.82 L282.4,435.78 L283.4,435.73 L284.4,435.84 L285.4,435.89 L286.4,435.87 L287.4,436.5 L288.4,436.07 L289.4,436.3 L290.4,435.88 L291.4,436.04 L292.4,436.47 L293.4,436.2 L294.4,436.33 L295.4,436.05 L296.4,435.9 L297.4,436.28 L298.4,436.53 L299.4,436.24 L300.4,436.41 L301.4,436.14 L302.4,435.9 L303.4,435.97 L304.4,435.93 L305.4,435.69 L306.4,435.69 L307.4,436.15 L308.4,435.91 L309.4,435.65 L310.4,436.22 L311.4,436.21 L312.4,437 L313.4,436.85 L314.4,437.05 L315.4,437.35 L316.4,437.56 L317.4,437.51 L318.4,437.7 L319.4,437.92 L320.4,438.02 L321.4,438.16 L321.4,438.24 L320.4,438.34 L319.4,438.44 L318.4,438.69 L317.4,438.73 L316.4,438.86 L315.4,439.08 L314.4,439.49 L313.4,439.26 L312.4,439.72 L311.4,439.48 L310.4,439.95 L309.4,440.76 L308.4,440.45 L307.4,440.02 L306.4,440.53 L305.4,440.3 L304.4,440.86 L303.4,440.22 L302.4,439.97 L301.4,439.91 L300.4,440.73 L299.4,440.29 L298.4,440.29 L297.4,440.8 L296.4,440.48 L295.4,440.26 L294.4,439.91 L293.4,440.06 L292.4,440.01 L291.4,440.11 L290.4,439.92 L289.4,440.58 L288.4,440.54 L287.4,440.04 L286.4,440.61 L285.4,440.67 L284.4,440.31 L283.4,440.47 L282.4,440.05 L281.4,440.61 L280.4,440.36 L279.4,440.73 L278.4,440.42 L277.4,440.86 L276.4,440.58 L275.4,440.74 L274.4,440.72 L273.4,440.53 L272.4,440.69 L271.4,440.71 L270.4,440.56 L269.4,440.44 L268.4,440.47 L267.4,440.84 L266.4,440.58 L265.4,440.37 L264.4,440.6 L263.4,440.65 L262.4,440.59 L261.4,440.68 L260.4,440.76 L259.4,440.15 L258.4,440.22 L257.4,440.52 L256.4,440.89 L255.4,440.02 L254.4,440.17 L253.4,440.62 L252.4,440.34 L251.4,440.75 L250.4,440.34 L249.4,440.74 L248.4,440.32 L247.4,440.68 L246.4,440.85 L245.4,440.01 L244.4,440.38 L243.4,440.81 L242.4,440.31 L241.4,440.72 L240.4,440.12 L239.4,440.42 L238.4,439.92 L237.4,440.9 L236.4,440.03 L235.4,440.06 L234.4,440.19 L233.4,440.82 L232.4,440.82 L231.4,440.22 L230.4,440.84 L229.4,440.76 L228.4,440.64 L227.4,440.67 L226.4,440.24 L225.4,440.84 L224.4,440.65 L223.4,440.85 L222.4,439.92 L221.4,440.47 L220.4,440.68 L219.4,440.74 L218.4,439.9 L217.4,439.93 L216.4,440.37 L215.4,440.37 L214.4,440.19 L213.4,440.57 L212.4,440.49 L211.4,439.94 L210.4,440.04 L209.4,440.18 L208.4,440.87 L207.4,440.84 L206.4,440.57 L205.4,440.86 L204.4,440.77 L203.4,440.1 L202.4,440.77 L201.4,440 L200.4,440.02 L199.4,440.04 L198.4,440.81 L197.4,440.1 L196.4,440.46 L195.4,440.13 L194.4,439.99 L193.4,440.54 L192.4,440.35 L191.4,439.95 L190.4,439.08 L189.4,438.2 Z" fill="#2f8c5b"/>
<path d="M187.4,416.7 H296.5 L291,425.5 H187.4 Z" fill="#4aa87a" fill-opacity="0.93"/>
<text x="189.8" y="423.8" font-size="7" font-weight="bold" fill-opacity="0.88" fill="#e8f8ee" letter-spacing="0.22">Morning Star Pad (Key - Em)</text>
<rect x="187.4" y="446.9" width="43.2" height="30" fill="#a0fa90"/>
<path d="M212.6,446.9 H230.6 V476.9 Z" fill="#b3f2a4"/>
<path d="M212.6,446.9 L230.4,476.9" stroke="#5c9a50" stroke-width="0.8"/>
<rect x="305.1" y="446.9" width="177.7" height="30" fill="#a0fa90"/>
<path d="M464.4,446.9 H482.8 V476.9 Z" fill="#b3f2a4"/>
<path d="M464.4,446.9 L482.6,476.9" stroke="#5c9a50" stroke-width="0.8"/>
<path d="M305.4,476.9 L313.5,446.9" stroke="#5c9a50" stroke-width="0.7"/>
<path d="M308.1,455.3 L309.1,454.46 L310.1,453.89 L311.1,453.51 L312.1,453.07 L313.1,453.6 L314.1,453.6 L315.1,453 L316.1,452.72 L317.1,453.04 L318.1,453.53 L319.1,453.17 L320.1,453.5 L321.1,453.66 L322.1,453.25 L323.1,453.18 L324.1,453.19 L325.1,453.24 L326.1,452.7 L327.1,452.86 L328.1,453.38 L329.1,453.4 L330.1,452.93 L331.1,452.85 L332.1,452.74 L333.1,453.69 L334.1,452.79 L335.1,452.72 L336.1,453.62 L337.1,452.92 L338.1,453.6 L339.1,452.74 L340.1,453.57 L341.1,453.59 L342.1,452.9 L343.1,453.14 L344.1,453.5 L345.1,453.56 L346.1,453.57 L347.1,453.48 L348.1,452.73 L349.1,453.39 L350.1,453.48 L351.1,452.84 L352.1,453.59 L353.1,453.48 L354.1,452.92 L355.1,453.4 L356.1,453.6 L357.1,453.45 L358.1,453.32 L359.1,452.74 L360.1,453.12 L361.1,453.51 L362.1,452.79 L363.1,453.44 L364.1,452.96 L365.1,453.49 L366.1,452.82 L367.1,453.27 L368.1,453.65 L369.1,453.45 L370.1,453.43 L371.1,453.1 L372.1,453.51 L373.1,453.62 L374.1,453.14 L375.1,453.08 L376.1,452.78 L377.1,453.67 L378.1,453.25 L379.1,453.51 L380.1,453.12 L381.1,453.33 L382.1,452.72 L383.1,453.01 L384.1,453.55 L385.1,453.67 L386.1,453 L387.1,453.67 L388.1,453.21 L389.1,453.37 L390.1,453.61 L391.1,452.96 L392.1,452.96 L393.1,452.9 L394.1,453.34 L395.1,452.8 L396.1,453.28 L397.1,452.83 L398.1,453.07 L399.1,453.11 L400.1,453.61 L401.1,452.71 L402.1,452.97 L403.1,452.96 L404.1,453.25 L405.1,453.61 L406.1,453.66 L407.1,453.21 L408.1,453 L409.1,453.08 L410.1,453.44 L411.1,453.39 L412.1,453.49 L413.1,452.79 L414.1,453.25 L415.1,453.37 L416.1,453.59 L417.1,453.14 L418.1,453.2 L419.1,453.55 L420.1,453.99 L421.1,453.58 L422.1,453.77 L423.1,454.14 L424.1,454.12 L425.1,454.34 L426.1,454.22 L427.1,454.45 L428.1,454.26 L429.1,454.69 L430.1,454.5 L431.1,454.64 L432.1,454.82 L433.1,454.95 L434.1,454.93 L435.1,454.95 L436.1,455.1 L437.1,455.11 L438.1,455.17 L439.1,455.22 L440.1,455.27 L440.1,455.33 L439.1,455.39 L438.1,455.43 L437.1,455.47 L436.1,455.49 L435.1,455.57 L434.1,455.59 L433.1,455.67 L432.1,455.89 L431.1,455.92 L430.1,455.83 L429.1,455.89 L428.1,456.13 L427.1,456.38 L426.1,456.32 L425.1,456.37 L424.1,456.38 L423.1,456.4 L422.1,456.98 L421.1,457.03 L420.1,456.88 L419.1,456.84 L418.1,456.99 L417.1,457.55 L416.1,457.23 L415.1,457.56 L414.1,457.79 L413.1,457.56 L412.1,457.08 L411.1,457.58 L410.1,456.92 L409.1,457.82 L408.1,457.4 L407.1,457.14 L406.1,457.51 L405.1,457.65 L404.1,457.74 L403.1,457.49 L402.1,457.3 L401.1,457.78 L400.1,457.54 L399.1,457.51 L398.1,457.29 L397.1,457.48 L396.1,457.69 L395.1,457.77 L394.1,457.59 L393.1,457.82 L392.1,457.61 L391.1,457.8 L390.1,457.45 L389.1,457.9 L388.1,457.63 L387.1,457.54 L386.1,457.86 L385.1,457.81 L384.1,456.95 L383.1,457.49 L382.1,457.56 L381.1,457.79 L380.1,457.04 L379.1,457.28 L378.1,456.97 L377.1,457.18 L376.1,457.11 L375.1,457.19 L374.1,457.75 L373.1,457.14 L372.1,457.62 L371.1,457.2 L370.1,457.73 L369.1,457.61 L368.1,457.86 L367.1,457.01 L366.1,457.51 L365.1,457.85 L364.1,457.84 L363.1,457.1 L362.1,457.72 L361.1,457.06 L360.1,457.77 L359.1,457.39 L358.1,457.36 L357.1,457.51 L356.1,457.49 L355.1,456.98 L354.1,457.24 L353.1,457.17 L352.1,457.89 L351.1,457.55 L350.1,457.3 L349.1,457.79 L348.1,457.71 L347.1,457.18 L346.1,457.33 L345.1,457.55 L344.1,457.64 L343.1,457.35 L342.1,457.09 L341.1,456.97 L340.1,457.16 L339.1,457.66 L338.1,457.24 L337.1,457.18 L336.1,457.53 L335.1,457.3 L334.1,457.38 L333.1,457.12 L332.1,457.75 L331.1,457.29 L330.1,457.31 L329.1,456.98 L328.1,457.14 L327.1,457.61 L326.1,457.9 L325.1,457.19 L324.1,457.57 L323.1,457.54 L322.1,457.74 L321.1,457.37 L320.1,457.15 L319.1,456.97 L318.1,456.93 L317.1,457.52 L316.1,457.87 L315.1,456.95 L314.1,457.71 L313.1,457.21 L312.1,457.7 L311.1,457.42 L310.1,456.76 L309.1,455.99 L308.1,455.3 Z" fill="#4d7d49"/>
<path d="M308.1,467.5 L309.1,466.74 L310.1,466.3 L311.1,465.74 L312.1,465.16 L313.1,465.36 L314.1,465.6 L315.1,465.06 L316.1,465.87 L317.1,465.74 L318.1,465.09 L319.1,465.07 L320.1,464.95 L321.1,465.63 L322.1,465.41 L323.1,465.33 L324.1,465.53 L325.1,465.58 L326.1,465.08 L327.1,464.91 L328.1,465.34 L329.1,465.75 L330.1,465.45 L331.1,465.69 L332.1,465.64 L333.1,465.29 L334.1,465.76 L335.1,465.66 L336.1,465.7 L337.1,465.82 L338.1,464.95 L339.1,465.18 L340.1,465.85 L341.1,465.09 L342.1,465.26 L343.1,465.48 L344.1,465.01 L345.1,465.69 L346.1,465.52 L347.1,465.75 L348.1,465.29 L349.1,465.68 L350.1,465.31 L351.1,465.53 L352.1,465.55 L353.1,465.73 L354.1,465.78 L355.1,465.82 L356.1,465.34 L357.1,465.85 L358.1,465.55 L359.1,465.89 L360.1,465.77 L361.1,465.62 L362.1,465.81 L363.1,465.53 L364.1,465.88 L365.1,465.4 L366.1,465.38 L367.1,465.23 L368.1,465.86 L369.1,464.99 L370.1,465.63 L371.1,465.05 L372.1,465.31 L373.1,465.65 L374.1,465.69 L375.1,465.85 L376.1,465.8 L377.1,465.3 L378.1,465.12 L379.1,465.41 L380.1,465.56 L381.1,465.46 L382.1,465.03 L383.1,465.07 L384.1,465.59 L385.1,465.86 L386.1,465.53 L387.1,465.02 L388.1,465.84 L389.1,465.76 L390.1,465.57 L391.1,465.35 L392.1,465.88 L393.1,465.03 L394.1,465.41 L395.1,465.55 L396.1,465.68 L397.1,465.23 L398.1,465.37 L399.1,465.45 L400.1,465.27 L401.1,465 L402.1,465.75 L403.1,465.09 L404.1,465.59 L405.1,465.59 L406.1,465.84 L407.1,465.17 L408.1,465.18 L409.1,464.9 L410.1,465.47 L411.1,465.06 L412.1,465.6 L413.1,465.78 L414.1,464.9 L415.1,465.62 L416.1,465.44 L417.1,465.87 L418.1,465.67 L419.1,465.85 L420.1,465.45 L421.1,465.47 L422.1,465.97 L423.1,466.09 L424.1,466.14 L425.1,466.34 L426.1,466.53 L427.1,466.69 L428.1,466.7 L429.1,466.62 L430.1,466.61 L431.1,466.83 L432.1,467 L433.1,466.97 L434.1,466.99 L435.1,467.1 L436.1,467.19 L437.1,467.34 L438.1,467.34 L439.1,467.42 L440.1,467.47 L440.1,467.53 L439.1,467.58 L438.1,467.62 L437.1,467.7 L436.1,467.72 L435.1,467.78 L434.1,467.82 L433.1,467.98 L432.1,468.15 L431.1,468.27 L430.1,468.25 L429.1,468.27 L428.1,468.26 L427.1,468.69 L426.1,468.67 L425.1,468.72 L424.1,468.64 L423.1,469.21 L422.1,468.87 L421.1,469.35 L420.1,469.19 L419.1,469.68 L418.1,469.89 L417.1,469.36 L416.1,469.12 L415.1,469.89 L414.1,469.58 L413.1,469.42 L412.1,469.86 L411.1,469.82 L410.1,469.73 L409.1,469.91 L408.1,469.97 L407.1,469.22 L406.1,469.14 L405.1,469.2 L404.1,470.06 L403.1,469.64 L402.1,469.64 L401.1,469.23 L400.1,469.94 L399.1,469.68 L398.1,470.02 L397.1,470.04 L396.1,469.82 L395.1,469.9 L394.1,469.48 L393.1,469.26 L392.1,469.36 L391.1,469.24 L390.1,469.99 L389.1,469.91 L388.1,469.64 L387.1,470.09 L386.1,469.55 L385.1,469.24 L384.1,469.5 L383.1,469.33 L382.1,469.22 L381.1,469.25 L380.1,469.4 L379.1,469.66 L378.1,469.3 L377.1,469.12 L376.1,469.86 L375.1,469.5 L374.1,469.46 L373.1,469.4 L372.1,469.46 L371.1,469.37 L370.1,469.79 L369.1,469.84 L368.1,469.61 L367.1,469.4 L366.1,469.58 L365.1,470.07 L364.1,469.44 L363.1,469.94 L362.1,469.58 L361.1,469.7 L360.1,469.41 L359.1,470.1 L358.1,469.2 L357.1,469.55 L356.1,469.65 L355.1,469.75 L354.1,469.33 L353.1,469.79 L352.1,469.4 L351.1,469.83 L350.1,469.7 L349.1,469.72 L348.1,469.83 L347.1,470.07 L346.1,469.82 L345.1,469.96 L344.1,469.91 L343.1,469.97 L342.1,469.27 L341.1,469.94 L340.1,469.25 L339.1,470.03 L338.1,469.5 L337.1,469.76 L336.1,469.47 L335.1,469.34 L334.1,469.6 L333.1,469.5 L332.1,469.57 L331.1,469.63 L330.1,469.29 L329.1,469.78 L328.1,469.85 L327.1,469.79 L326.1,469.9 L325.1,469.23 L324.1,469.54 L323.1,469.54 L322.1,469.86 L321.1,469.95 L320.1,469.9 L319.1,469.85 L318.1,469.91 L317.1,469.97 L316.1,469.38 L315.1,469.71 L314.1,469.54 L313.1,469.32 L312.1,469.24 L311.1,469.33 L310.1,468.73 L309.1,468.32 L308.1,467.5 Z" fill="#4d7d49"/>
<path d="M305.1,446.9 H414.1 L409.1,455.7 H305.1 Z" fill="#6c9c62" fill-opacity="0.93"/>
<text x="307.5" y="454" font-size="7" font-weight="bold" fill-opacity="0.88" fill="#e9f6e6" letter-spacing="0.22">Morning Star Pad (Key - Em)</text>
<path d="M305.1,468.3 H315.1 L319.1,476.9 H305.1 Z" fill="#6c9c62"/>
<circle cx="310.1" cy="472.5" r="1.5" fill="none" stroke="#dff0da" stroke-width="0.9"/>
<path d="M187.4,481.1 L190.8,477.7 H233.7 V503 H187.4 Z" fill="#e1fd05"/>
<rect x="423.4" y="477.7" width="62.9" height="27" fill="#e1fd05"/>
<path d="M423.4,477.7 H444.6 L439.6,485.7 H423.4 Z" fill="#8f9612"/>
<text x="426.6" y="484.3" font-size="7" font-weight="bold" fill-opacity="0.88" fill="#eef2c8" letter-spacing="0.2">FX</text>
<rect x="423.4" y="487.3" width="59.6" height="0.8" fill="#8f9a18"/>
<rect x="188" y="487.3" width="43" height="0.8" fill="#8f9a18"/>
<rect x="201.55" y="0" width="1.25" height="503" fill="#ccd0d4" opacity="0.6"/>
</svg>
<div id="panel">
<div class="row f" style="top:-2.5px"><div class="fbg"></div><div class="fbg2"></div><div class="strip" style="left:1.1px;top:0.7px;width:7.3px;height:19.8px;background:#0a9ad6"></div><div class="strip" style="left:1.1px;top:20.5px;width:7.3px;height:8.3px;background:#0a6a96"></div><svg class="ico" style="left:0;top:20px" width="9" height="10" viewBox="0 0 9 10"><path d="M2.9,6.9 L4.7,4 L6.5,6.9 Z" fill="rgba(235,250,255,.8)"/></svg><div class="btns"><div class="b" style="left:0">M</div><div class="b" style="left:17.05px">S</div><div class="b" style="left:34.1px"><svg viewBox="0 0 17 15"><circle cx="8.9" cy="7.4" r="3.15" fill="#c9cbce"/></svg></div><div class="b" style="left:51.15px"><svg viewBox="0 0 17 15"><path d="M9.2,3.8 A3.6,3.6 0 0 0 9.2,11 Z" fill="#c9cbce"/><path d="M10.7,4.2 A3.5,3.5 0 0 1 10.7,10.6" fill="none" stroke="#c9cbce" stroke-width="1.05" opacity="0.85"/></svg></div></div><div class="name">Amen</div><svg class="ico" style="left:161px;top:6.6px" width="16" height="10" viewBox="0 0 16 10"><path d="M1.4,0.4 H5.6 L6.8,1.5 H11.2 V2.9 L14.6,3.9 L11.4,8.1 H1.4 Z" fill="#b9bbbe"/></svg></div>
<div class="row t" style="top:27.5px"><div class="tbg"></div><div class="tbg2"></div><div class="tbg3"></div><div class="strip" style="left:8.6px;top:0.5px;width:7.8px;height:20px;background:#0a5ee8"></div><div class="strip" style="left:8.6px;top:20.5px;width:7.8px;height:8.2px;background:#0a4ab4"></div><svg class="ico" style="left:8.6px;top:20.6px" width="8" height="8" viewBox="0 0 8 8"><path d="M1.2,5.6 L3,2.6 L4.6,5.4 L6.6,2.4" fill="none" stroke="rgba(255,255,255,.35)" stroke-width="0.8"/></svg><div class="num">1</div><div class="btns"><div class="b" style="left:0;color:#c9cbce">M</div><div class="b" style="left:16.8px;color:#c9cbce">S</div><div class="b" style="left:33.6px"><svg viewBox="0 0 17 15"><circle cx="8.9" cy="7.4" r="3.15" fill="#c9cbce"/></svg></div><div class="b" style="left:50.4px"><svg viewBox="0 0 17 15"><path d="M9.2,3.8 A3.6,3.6 0 0 0 9.2,11 Z" fill="#c9cbce"/><path d="M10.7,4.2 A3.5,3.5 0 0 1 10.7,10.6" fill="none" stroke="#c9cbce" stroke-width="1.05" opacity="0.85"/></svg></div></div><div class="name">cw_a.._165</div><svg class="ico" style="left:160px;top:4.2px" width="15" height="13" viewBox="0 0 15 13"><path d="M2,8.9 L4.6,3 L7,9.4 L9.5,1 L12,9.2" fill="none" stroke="#b9bbbe" stroke-width="1.6" stroke-linejoin="round" stroke-linecap="round"/></svg><div class="sl"><i style="width:50.4px"></i></div></div>
<div class="row t" style="top:57.5px"><div class="tbg"></div><div class="tbg2"></div><div class="tbg3"></div><div class="strip" style="left:8.6px;top:0.5px;width:7.8px;height:20px;background:#0a5ee8"></div><div class="strip" style="left:8.6px;top:20.5px;width:7.8px;height:8.2px;background:#0a4ab4"></div><svg class="ico" style="left:8.6px;top:20.6px" width="8" height="8" viewBox="0 0 8 8"><path d="M1.2,5.6 L3,2.6 L4.6,5.4 L6.6,2.4" fill="none" stroke="rgba(255,255,255,.35)" stroke-width="0.8"/></svg><div class="num">2</div><div class="btns"><div class="b" style="left:0;color:#c9cbce">M</div><div class="b" style="left:16.8px;color:#c9cbce">S</div><div class="b" style="left:33.6px"><svg viewBox="0 0 17 15"><circle cx="8.9" cy="7.4" r="3.15" fill="#c9cbce"/></svg></div><div class="b" style="left:50.4px"><svg viewBox="0 0 17 15"><path d="M9.2,3.8 A3.6,3.6 0 0 0 9.2,11 Z" fill="#c9cbce"/><path d="M10.7,4.2 A3.5,3.5 0 0 1 10.7,10.6" fill="none" stroke="#c9cbce" stroke-width="1.05" opacity="0.85"/></svg></div></div><div class="name">cw_am..65 4</div><svg class="ico" style="left:160px;top:4.2px" width="15" height="13" viewBox="0 0 15 13"><path d="M2,8.9 L4.6,3 L7,9.4 L9.5,1 L12,9.2" fill="none" stroke="#b9bbbe" stroke-width="1.6" stroke-linejoin="round" stroke-linecap="round"/></svg><div class="sl"><i style="width:50.4px"></i></div></div>
<div class="row t" style="top:87.5px"><div class="tbg"></div><div class="tbg2"></div><div class="tbg3"></div><div class="strip" style="left:8.6px;top:0.5px;width:7.8px;height:20px;background:#0a5ee8"></div><div class="strip" style="left:8.6px;top:20.5px;width:7.8px;height:8.2px;background:#0a4ab4"></div><svg class="ico" style="left:8.6px;top:20.6px" width="8" height="8" viewBox="0 0 8 8"><path d="M1.2,5.6 L3,2.6 L4.6,5.4 L6.6,2.4" fill="none" stroke="rgba(255,255,255,.35)" stroke-width="0.8"/></svg><div class="num">3</div><div class="btns"><div class="b" style="left:0;color:#c9cbce">M</div><div class="b" style="left:16.8px;color:#c9cbce">S</div><div class="b" style="left:33.6px"><svg viewBox="0 0 17 15"><circle cx="8.9" cy="7.4" r="3.15" fill="#c9cbce"/></svg></div><div class="b" style="left:50.4px"><svg viewBox="0 0 17 15"><path d="M9.2,3.8 A3.6,3.6 0 0 0 9.2,11 Z" fill="#c9cbce"/><path d="M10.7,4.2 A3.5,3.5 0 0 1 10.7,10.6" fill="none" stroke="#c9cbce" stroke-width="1.05" opacity="0.85"/></svg></div></div><div class="name">cw_am..65 5</div><svg class="ico" style="left:160px;top:4.2px" width="15" height="13" viewBox="0 0 15 13"><path d="M2,8.9 L4.6,3 L7,9.4 L9.5,1 L12,9.2" fill="none" stroke="#b9bbbe" stroke-width="1.6" stroke-linejoin="round" stroke-linecap="round"/></svg><div class="sl"><i style="width:52.9px"></i></div></div>
<div class="row t" style="top:117.5px"><div class="tbg"></div><div class="tbg2"></div><div class="tbg3"></div><div class="strip" style="left:8.6px;top:0.5px;width:7.8px;height:20px;background:#0a5ee8"></div><div class="strip" style="left:8.6px;top:20.5px;width:7.8px;height:8.2px;background:#0a4ab4"></div><svg class="ico" style="left:8.6px;top:20.6px" width="8" height="8" viewBox="0 0 8 8"><path d="M1.2,5.6 L3,2.6 L4.6,5.4 L6.6,2.4" fill="none" stroke="rgba(255,255,255,.35)" stroke-width="0.8"/></svg><div class="num">4</div><div class="btns"><div class="b" style="left:0;color:#c9cbce">M</div><div class="b" style="left:16.8px;color:#c9cbce">S</div><div class="b" style="left:33.6px"><svg viewBox="0 0 17 15"><circle cx="8.9" cy="7.4" r="3.15" fill="#c9cbce"/></svg></div><div class="b" style="left:50.4px"><svg viewBox="0 0 17 15"><path d="M9.2,3.8 A3.6,3.6 0 0 0 9.2,11 Z" fill="#c9cbce"/><path d="M10.7,4.2 A3.5,3.5 0 0 1 10.7,10.6" fill="none" stroke="#c9cbce" stroke-width="1.05" opacity="0.85"/></svg></div></div><div class="name">cw_am..65 6</div><svg class="ico" style="left:160px;top:4.2px" width="15" height="13" viewBox="0 0 15 13"><path d="M2,8.9 L4.6,3 L7,9.4 L9.5,1 L12,9.2" fill="none" stroke="#b9bbbe" stroke-width="1.6" stroke-linejoin="round" stroke-linecap="round"/></svg><div class="sl"><i style="width:50.4px"></i></div></div>
<div class="row t" style="top:147.5px"><div class="tbg"></div><div class="tbg2"></div><div class="tbg3"></div><div class="strip" style="left:8.6px;top:0.5px;width:7.8px;height:20px;background:#0a5ee8"></div><div class="strip" style="left:8.6px;top:20.5px;width:7.8px;height:8.2px;background:#0a4ab4"></div><svg class="ico" style="left:8.6px;top:20.6px" width="8" height="8" viewBox="0 0 8 8"><path d="M1.2,5.6 L3,2.6 L4.6,5.4 L6.6,2.4" fill="none" stroke="rgba(255,255,255,.35)" stroke-width="0.8"/></svg><div class="num">5</div><div class="btns"><div class="b" style="left:0;color:#c9cbce">M</div><div class="b" style="left:16.8px;color:#c9cbce">S</div><div class="b" style="left:33.6px"><svg viewBox="0 0 17 15"><circle cx="8.9" cy="7.4" r="3.15" fill="#c9cbce"/></svg></div><div class="b" style="left:50.4px"><svg viewBox="0 0 17 15"><path d="M9.2,3.8 A3.6,3.6 0 0 0 9.2,11 Z" fill="#c9cbce"/><path d="M10.7,4.2 A3.5,3.5 0 0 1 10.7,10.6" fill="none" stroke="#c9cbce" stroke-width="1.05" opacity="0.85"/></svg></div></div><div class="name">cw_am..65 7</div><svg class="ico" style="left:160px;top:4.2px" width="15" height="13" viewBox="0 0 15 13"><path d="M2,8.9 L4.6,3 L7,9.4 L9.5,1 L12,9.2" fill="none" stroke="#b9bbbe" stroke-width="1.6" stroke-linejoin="round" stroke-linecap="round"/></svg><div class="sl"><i style="width:50.4px"></i></div></div>
<div class="row f" style="top:177.5px"><div class="fbg"></div><div class="fbg2"></div><div class="strip" style="left:1.1px;top:0.7px;width:7.3px;height:19.8px;background:#0c98dc"></div><div class="strip" style="left:1.1px;top:20.5px;width:7.3px;height:8.3px;background:#0a6a96"></div><svg class="ico" style="left:0;top:20px" width="9" height="10" viewBox="0 0 9 10"><path d="M2.9,6.9 L4.7,4 L6.5,6.9 Z" fill="rgba(235,250,255,.8)"/></svg><div class="btns"><div class="b" style="left:0">M</div><div class="b" style="left:17.05px">S</div><div class="b" style="left:34.1px"><svg viewBox="0 0 17 15"><circle cx="8.9" cy="7.4" r="3.15" fill="#c9cbce"/></svg></div><div class="b" style="left:51.15px"><svg viewBox="0 0 17 15"><path d="M9.2,3.8 A3.6,3.6 0 0 0 9.2,11 Z" fill="#c9cbce"/><path d="M10.7,4.2 A3.5,3.5 0 0 1 10.7,10.6" fill="none" stroke="#c9cbce" stroke-width="1.05" opacity="0.85"/></svg></div></div><div class="name">Think</div><svg class="ico" style="left:161px;top:6.6px" width="16" height="10" viewBox="0 0 16 10"><path d="M1.4,0.4 H5.6 L6.8,1.5 H11.2 V2.9 L14.6,3.9 L11.4,8.1 H1.4 Z" fill="#b9bbbe"/></svg></div>
<div class="row t" style="top:207.5px"><div class="tbg"></div><div class="tbg2"></div><div class="tbg3"></div><div class="strip" style="left:8.6px;top:0.5px;width:7.8px;height:20px;background:#5cf094"></div><div class="strip" style="left:8.6px;top:20.5px;width:7.8px;height:8.2px;background:#4cb478"></div><svg class="ico" style="left:8.6px;top:20.6px" width="8" height="8" viewBox="0 0 8 8"><path d="M1.2,5.6 L3,2.6 L4.6,5.4 L6.6,2.4" fill="none" stroke="rgba(255,255,255,.35)" stroke-width="0.8"/></svg><div class="num">6</div><div class="btns"><div class="b" style="left:0;color:#c9cbce">M</div><div class="b" style="left:16.8px;color:#c9cbce">S</div><div class="b" style="left:33.6px"><svg viewBox="0 0 17 15"><circle cx="8.9" cy="7.4" r="3.15" fill="#c9cbce"/></svg></div><div class="b" style="left:50.4px"><svg viewBox="0 0 17 15"><path d="M9.2,3.8 A3.6,3.6 0 0 0 9.2,11 Z" fill="#c9cbce"/><path d="M10.7,4.2 A3.5,3.5 0 0 1 10.7,10.6" fill="none" stroke="#c9cbce" stroke-width="1.05" opacity="0.85"/></svg></div></div><div class="name">Think 3-162</div><svg class="ico" style="left:160px;top:4.2px" width="15" height="13" viewBox="0 0 15 13"><path d="M2,8.9 L4.6,3 L7,9.4 L9.5,1 L12,9.2" fill="none" stroke="#b9bbbe" stroke-width="1.6" stroke-linejoin="round" stroke-linecap="round"/></svg><div class="sl"><i style="width:62.4px"></i></div></div>
<div class="row t" style="top:237.5px"><div class="tbg"></div><div class="tbg2"></div><div class="tbg3"></div><div class="strip" style="left:8.6px;top:0.5px;width:7.8px;height:20px;background:#5cf094"></div><div class="strip" style="left:8.6px;top:20.5px;width:7.8px;height:8.2px;background:#4cb478"></div><svg class="ico" style="left:8.6px;top:20.6px" width="8" height="8" viewBox="0 0 8 8"><path d="M1.2,5.6 L3,2.6 L4.6,5.4 L6.6,2.4" fill="none" stroke="rgba(255,255,255,.35)" stroke-width="0.8"/></svg><div class="num">7</div><div class="btns"><div class="b" style="left:0;color:#c9cbce">M</div><div class="b" style="left:16.8px;color:#c9cbce">S</div><div class="b" style="left:33.6px"><svg viewBox="0 0 17 15"><circle cx="8.9" cy="7.4" r="3.15" fill="#c9cbce"/></svg></div><div class="b" style="left:50.4px"><svg viewBox="0 0 17 15"><path d="M9.2,3.8 A3.6,3.6 0 0 0 9.2,11 Z" fill="#c9cbce"/><path d="M10.7,4.2 A3.5,3.5 0 0 1 10.7,10.6" fill="none" stroke="#c9cbce" stroke-width="1.05" opacity="0.85"/></svg></div></div><div class="name">Think 3..62 2</div><svg class="ico" style="left:160px;top:4.2px" width="15" height="13" viewBox="0 0 15 13"><path d="M2,8.9 L4.6,3 L7,9.4 L9.5,1 L12,9.2" fill="none" stroke="#b9bbbe" stroke-width="1.6" stroke-linejoin="round" stroke-linecap="round"/></svg><div class="sl"><i style="width:62.4px"></i></div></div>
<div class="row f" style="top:267.5px"><div class="fbg"></div><div class="fbg2"></div><div class="strip" style="left:1.1px;top:0.7px;width:7.3px;height:19.8px;background:#98f280"></div><div class="strip" style="left:1.1px;top:20.5px;width:7.3px;height:8.3px;background:#78b468"></div><svg class="ico" style="left:0;top:20px" width="9" height="10" viewBox="0 0 9 10"><path d="M2.9,6.9 L4.7,4 L6.5,6.9 Z" fill="rgba(235,250,255,.8)"/></svg><div class="btns"><div class="b" style="left:0">M</div><div class="b" style="left:17.05px">S</div><div class="b" style="left:34.1px"><svg viewBox="0 0 17 15"><circle cx="8.9" cy="7.4" r="3.15" fill="#c9cbce"/></svg></div><div class="b" style="left:51.15px"><svg viewBox="0 0 17 15"><path d="M9.2,3.8 A3.6,3.6 0 0 0 9.2,11 Z" fill="#c9cbce"/><path d="M10.7,4.2 A3.5,3.5 0 0 1 10.7,10.6" fill="none" stroke="#c9cbce" stroke-width="1.05" opacity="0.85"/></svg></div></div><div class="name">Bass</div><svg class="ico" style="left:161px;top:6.6px" width="16" height="10" viewBox="0 0 16 10"><path d="M1.4,0.4 H5.6 L6.8,1.5 H11.2 V2.9 L14.6,3.9 L11.4,8.1 H1.4 Z" fill="#b9bbbe"/></svg></div>
<div class="row t" style="top:297.5px"><div class="tbg"></div><div class="tbg2"></div><div class="tbg3"></div><div class="strip" style="left:8.6px;top:0.5px;width:7.8px;height:20px;background:#10dcc8"></div><div class="strip" style="left:8.6px;top:20.5px;width:7.8px;height:8.2px;background:#0ca090"></div><svg class="ico" style="left:8.6px;top:20.6px" width="8" height="8" viewBox="0 0 8 8"><path d="M1.2,5.6 L3,2.6 L4.6,5.4 L6.6,2.4" fill="none" stroke="rgba(255,255,255,.35)" stroke-width="0.8"/></svg><div class="num">8</div><div class="btns"><div class="b" style="left:0;color:#c9cbce">M</div><div class="b" style="left:16.8px;color:#c9cbce">S</div><div class="b" style="left:33.6px"><svg viewBox="0 0 17 15"><circle cx="8.9" cy="7.4" r="3.15" fill="#c9cbce"/></svg></div><div class="b" style="left:50.4px"><svg viewBox="0 0 17 15"><path d="M9.2,3.8 A3.6,3.6 0 0 0 9.2,11 Z" fill="#c9cbce"/><path d="M10.7,4.2 A3.5,3.5 0 0 1 10.7,10.6" fill="none" stroke="#c9cbce" stroke-width="1.05" opacity="0.85"/></svg></div></div><div class="name">Stand..JW2)</div><svg class="ico" style="left:160px;top:4.2px" width="15" height="13" viewBox="0 0 15 13"><path d="M2,8.9 L4.6,3 L7,9.4 L9.5,1 L12,9.2" fill="none" stroke="#b9bbbe" stroke-width="1.6" stroke-linejoin="round" stroke-linecap="round"/></svg><div class="sl"><i style="width:50.4px"></i></div></div>
<div class="row f" style="top:327.5px"><div class="fbg"></div><div class="fbg2"></div><div class="strip" style="left:1.1px;top:0.7px;width:7.3px;height:19.8px;background:#98f280"></div><div class="strip" style="left:1.1px;top:20.5px;width:7.3px;height:8.3px;background:#78b468"></div><svg class="ico" style="left:0;top:20px" width="9" height="10" viewBox="0 0 9 10"><path d="M2.9,6.9 L4.7,4 L6.5,6.9 Z" fill="rgba(235,250,255,.8)"/></svg><div class="btns"><div class="b" style="left:0">M</div><div class="b" style="left:17.05px">S</div><div class="b rec" style="left:34.1px"><svg viewBox="0 0 17 15"><circle cx="8.9" cy="7.4" r="3.15" fill="#f4f4f4"/></svg></div><div class="b mon" style="left:51.15px"><svg viewBox="0 0 17 15"><path d="M9.2,3.8 A3.6,3.6 0 0 0 9.2,11 Z" fill="#f4f4f4"/><path d="M10.7,4.2 A3.5,3.5 0 0 1 10.7,10.6" fill="none" stroke="#f4f4f4" stroke-width="1.05" opacity="0.85"/></svg></div></div><div class="name">Pad Sounds</div><svg class="ico" style="left:161px;top:6.6px" width="16" height="10" viewBox="0 0 16 10"><path d="M1.4,0.4 H5.6 L6.8,1.5 H11.2 V2.9 L14.6,3.9 L11.4,8.1 H1.4 Z" fill="#b9bbbe"/></svg></div>
<div class="row t" style="top:357.5px"><div class="tbg"></div><div class="tbg2"></div><div class="tbg3"></div><div class="strip" style="left:8.6px;top:0.5px;width:7.8px;height:20px;background:#0c98dc"></div><div class="strip" style="left:8.6px;top:20.5px;width:7.8px;height:8.2px;background:#0a6ea4"></div><svg class="ico" style="left:8.6px;top:20.6px" width="8" height="8" viewBox="0 0 8 8"><path d="M1.2,5.6 L3,2.6 L4.6,5.4 L6.6,2.4" fill="none" stroke="rgba(255,255,255,.35)" stroke-width="0.8"/></svg><div class="num">9</div><div class="btns"><div class="b" style="left:0;color:#c9cbce">M</div><div class="b" style="left:16.8px;color:#c9cbce">S</div><div class="b rec" style="left:33.6px"><svg viewBox="0 0 17 15"><circle cx="8.9" cy="7.4" r="3.15" fill="#f4f4f4"/></svg></div><div class="b mon" style="left:50.4px"><svg viewBox="0 0 17 15"><path d="M9.2,3.8 A3.6,3.6 0 0 0 9.2,11 Z" fill="#f4f4f4"/><path d="M10.7,4.2 A3.5,3.5 0 0 1 10.7,10.6" fill="none" stroke="#f4f4f4" stroke-width="1.05" opacity="0.85"/></svg></div></div><div class="name">Kontakt 7</div><svg class="ico" style="left:160px;top:5.6px" width="14" height="10" viewBox="0 0 14 10"><path d="M0,0 H1.6 V4.6 H4 V0 H5.4 V4.6 H7.9 V0 H9.3 V4.6 H11.8 V0 H13.3 V8.8 H0 Z" fill="#b9bbbe"/></svg><div class="sl"><i style="width:57.1px"></i></div></div>
<div class="row t" style="top:387.5px"><div class="tbg"></div><div class="tbg2"></div><div class="tbg3"></div><div class="strip" style="left:8.6px;top:0.5px;width:7.8px;height:20px;background:#10b4ec"></div><div class="strip" style="left:8.6px;top:20.5px;width:7.8px;height:8.2px;background:#0c84b0"></div><svg class="ico" style="left:8.6px;top:20.6px" width="8" height="8" viewBox="0 0 8 8"><path d="M1.2,5.6 L3,2.6 L4.6,5.4 L6.6,2.4" fill="none" stroke="rgba(255,255,255,.35)" stroke-width="0.8"/></svg><div class="num">10</div><div class="btns"><div class="b" style="left:0;color:#c9cbce">M</div><div class="b" style="left:16.8px;color:#c9cbce">S</div><div class="b" style="left:33.6px"><svg viewBox="0 0 17 15"><circle cx="8.9" cy="7.4" r="3.15" fill="#c9cbce"/></svg></div><div class="b" style="left:50.4px"><svg viewBox="0 0 17 15"><path d="M9.2,3.8 A3.6,3.6 0 0 0 9.2,11 Z" fill="#c9cbce"/><path d="M10.7,4.2 A3.5,3.5 0 0 1 10.7,10.6" fill="none" stroke="#c9cbce" stroke-width="1.05" opacity="0.85"/></svg></div></div><div class="name">Kontakt 7</div><svg class="ico" style="left:160px;top:5.6px" width="14" height="10" viewBox="0 0 14 10"><path d="M0,0 H1.6 V4.6 H4 V0 H5.4 V4.6 H7.9 V0 H9.3 V4.6 H11.8 V0 H13.3 V8.8 H0 Z" fill="#b9bbbe"/></svg><div class="sl"><i style="width:54.4px"></i></div></div>
<div class="row t" style="top:417.5px"><div class="tbg"></div><div class="tbg2"></div><div class="tbg3"></div><div class="strip" style="left:8.6px;top:0.5px;width:7.8px;height:20px;background:#5cf094"></div><div class="strip" style="left:8.6px;top:20.5px;width:7.8px;height:8.2px;background:#4cb478"></div><svg class="ico" style="left:8.6px;top:20.6px" width="8" height="8" viewBox="0 0 8 8"><path d="M1.2,5.6 L3,2.6 L4.6,5.4 L6.6,2.4" fill="none" stroke="rgba(255,255,255,.35)" stroke-width="0.8"/></svg><div class="num">11</div><div class="btns"><div class="b" style="left:0;color:#c9cbce">M</div><div class="b" style="left:16.8px;color:#c9cbce">S</div><div class="b" style="left:33.6px"><svg viewBox="0 0 17 15"><circle cx="8.9" cy="7.4" r="3.15" fill="#c9cbce"/></svg></div><div class="b" style="left:50.4px"><svg viewBox="0 0 17 15"><path d="M9.2,3.8 A3.6,3.6 0 0 0 9.2,11 Z" fill="#c9cbce"/><path d="M10.7,4.2 A3.5,3.5 0 0 1 10.7,10.6" fill="none" stroke="#c9cbce" stroke-width="1.05" opacity="0.85"/></svg></div></div><div class="name">Mornin.. Em)</div><svg class="ico" style="left:160px;top:4.2px" width="15" height="13" viewBox="0 0 15 13"><path d="M2,8.9 L4.6,3 L7,9.4 L9.5,1 L12,9.2" fill="none" stroke="#b9bbbe" stroke-width="1.6" stroke-linejoin="round" stroke-linecap="round"/></svg><div class="sl"><i style="width:49.9px"></i></div></div>
<div class="row t sel" style="top:447.5px"><div class="tbg"></div><div class="tbg2"></div><div class="tbg3"></div><div class="strip" style="left:8.6px;top:0.5px;width:7.8px;height:20px;background:#98f280"></div><div class="strip" style="left:8.6px;top:20.5px;width:7.8px;height:8.2px;background:#78b468"></div><svg class="ico" style="left:8.6px;top:20.6px" width="8" height="8" viewBox="0 0 8 8"><path d="M1.2,5.6 L3,2.6 L4.6,5.4 L6.6,2.4" fill="none" stroke="rgba(255,255,255,.35)" stroke-width="0.8"/></svg><div class="num">12</div><div class="btns"><div class="b" style="left:0;color:#eeeff0">M</div><div class="b" style="left:16.8px;color:#eeeff0">S</div><div class="b" style="left:33.6px"><svg viewBox="0 0 17 15"><circle cx="8.9" cy="7.4" r="3.15" fill="#eeeff0"/></svg></div><div class="b" style="left:50.4px"><svg viewBox="0 0 17 15"><path d="M9.2,3.8 A3.6,3.6 0 0 0 9.2,11 Z" fill="#eeeff0"/><path d="M10.7,4.2 A3.5,3.5 0 0 1 10.7,10.6" fill="none" stroke="#eeeff0" stroke-width="1.05" opacity="0.85"/></svg></div></div><div class="name">Mornin.. Em)</div><svg class="ico" style="left:160px;top:4.2px" width="15" height="13" viewBox="0 0 15 13"><path d="M2,8.9 L4.6,3 L7,9.4 L9.5,1 L12,9.2" fill="none" stroke="#e4e5e7" stroke-width="1.6" stroke-linejoin="round" stroke-linecap="round"/></svg><div class="sl"><i style="width:49.9px"></i></div></div>
<div class="row f" style="top:477.5px"><div class="fbg"></div><div class="fbg2"></div><div class="strip" style="left:1.1px;top:0.7px;width:7.3px;height:19.8px;background:#e0f000"></div><div class="strip" style="left:1.1px;top:20.5px;width:7.3px;height:8.3px;background:#a0aa10"></div><svg class="ico" style="left:0;top:20px" width="9" height="10" viewBox="0 0 9 10"><path d="M2.9,6.9 L4.7,4 L6.5,6.9 Z" fill="rgba(235,250,255,.8)"/></svg><div class="btns"><div class="b" style="left:0">M</div><div class="b" style="left:17.05px">S</div><div class="b" style="left:34.1px"><svg viewBox="0 0 17 15"><circle cx="8.9" cy="7.4" r="3.15" fill="#c9cbce"/></svg></div><div class="b" style="left:51.15px"><svg viewBox="0 0 17 15"><path d="M9.2,3.8 A3.6,3.6 0 0 0 9.2,11 Z" fill="#c9cbce"/><path d="M10.7,4.2 A3.5,3.5 0 0 1 10.7,10.6" fill="none" stroke="#c9cbce" stroke-width="1.05" opacity="0.85"/></svg></div></div><div class="name">FX</div><svg class="ico" style="left:161px;top:6.6px" width="14" height="9" viewBox="0 0 14 9"><path d="M1,0.3 H5 L6,1.4 H12 V7.6 H1 Z" fill="#b4b6b9"/><path d="M1,2.6 H12" stroke="#303337" stroke-width="0.7"/></svg></div>
<div class="sep" style="top:26.4px"></div>
<div class="sep" style="top:56.4px"></div>
<div class="sep" style="top:86.4px"></div>
<div class="sep" style="top:116.4px"></div>
<div class="sep" style="top:146.4px"></div>
<div class="sep" style="top:176.4px"></div>
<div class="sep" style="top:206.4px"></div>
<div class="sep" style="top:236.4px"></div>
<div class="sep" style="top:266.4px"></div>
<div class="sep" style="top:296.4px"></div>
<div class="sep" style="top:326.4px"></div>
<div class="sep" style="top:356.4px"></div>
<div class="sep" style="top:386.4px"></div>
<div class="sep" style="top:416.4px"></div>
<div class="sep" style="top:446.4px"></div>
<div class="sep" style="top:476.4px"></div>
</div>
</div></body></html>
